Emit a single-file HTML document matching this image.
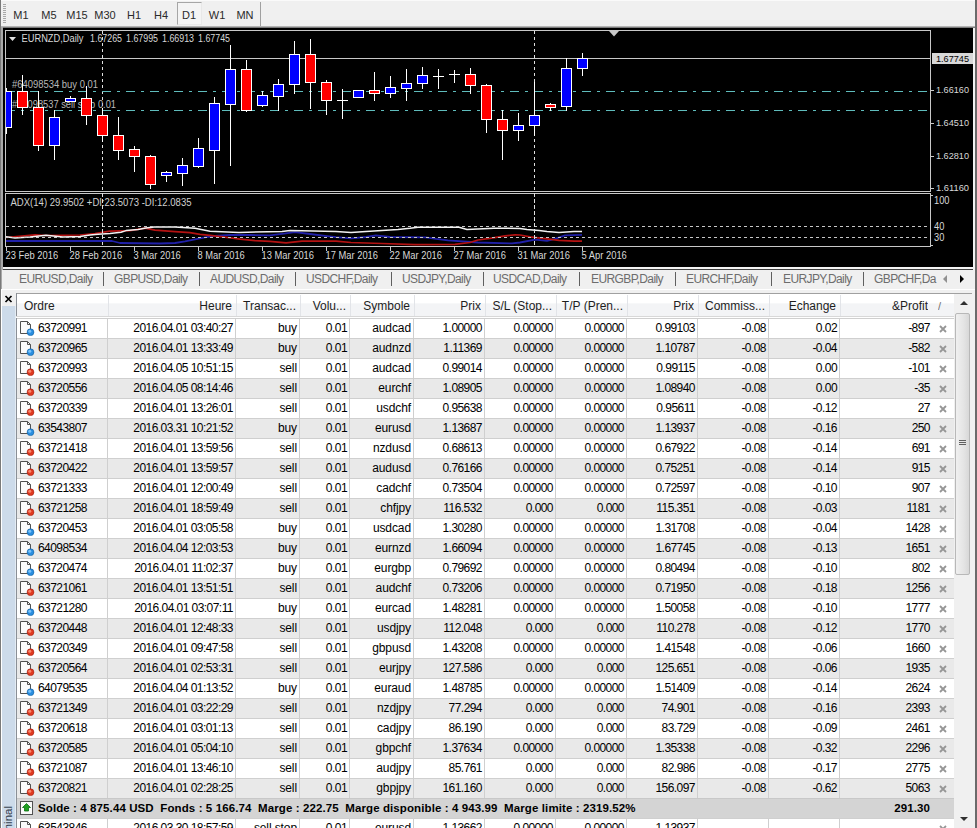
<!DOCTYPE html>
<html><head><meta charset="utf-8"><style>
html,body{margin:0;padding:0}
body{width:977px;height:828px;overflow:hidden;position:relative;background:#f0f0f0;font-family:"Liberation Sans", sans-serif}
.tb{position:absolute;font-size:11px;color:#2a2a2a;text-align:center;line-height:14px}
.tab{position:absolute;font-size:12px;letter-spacing:-0.6px;color:#6d6d6d;line-height:16px;white-space:nowrap}
.ht{position:absolute;font-size:12px;color:#1e1e1e;line-height:24px;white-space:nowrap;overflow:hidden}
.td{position:absolute;font-size:12px;letter-spacing:-0.55px;color:#000;line-height:20px;white-space:nowrap;text-align:right}
.x{position:absolute;font-size:11px;color:#8a8a8a;line-height:20px;width:14px;text-align:center}
</style></head>
<body>
<div style="position:absolute;left:0;top:0;width:977px;height:26px;background:#f0f0f0;border-top:1px solid #fafafa;box-sizing:border-box"></div>
<div style="position:absolute;left:0;top:26px;width:977px;height:1px;background:#b4b4b4"></div>
<div style="position:absolute;left:0;top:27px;width:977px;height:1px;background:#7c7c7c"></div>
<div style="position:absolute;left:3px;top:4px;width:3px;height:1px;background:#a8a8a8"></div>
<div style="position:absolute;left:3px;top:6px;width:3px;height:1px;background:#a8a8a8"></div>
<div style="position:absolute;left:3px;top:8px;width:3px;height:1px;background:#a8a8a8"></div>
<div style="position:absolute;left:3px;top:10px;width:3px;height:1px;background:#a8a8a8"></div>
<div style="position:absolute;left:3px;top:12px;width:3px;height:1px;background:#a8a8a8"></div>
<div style="position:absolute;left:3px;top:14px;width:3px;height:1px;background:#a8a8a8"></div>
<div style="position:absolute;left:3px;top:16px;width:3px;height:1px;background:#a8a8a8"></div>
<div style="position:absolute;left:3px;top:18px;width:3px;height:1px;background:#a8a8a8"></div>
<div style="position:absolute;left:3px;top:20px;width:3px;height:1px;background:#a8a8a8"></div>
<div style="position:absolute;left:3px;top:22px;width:3px;height:1px;background:#a8a8a8"></div>
<div style="position:absolute;left:177px;top:2px;width:25px;height:23px;box-sizing:border-box;border:1px solid #a6a6a6;border-right-color:#e8e8e8;border-bottom-color:#e8e8e8;background:#f4f4f4"></div>
<div class="tb" style="left:1px;top:8px;width:40px">M1</div>
<div class="tb" style="left:29px;top:8px;width:40px">M5</div>
<div class="tb" style="left:57px;top:8px;width:40px">M15</div>
<div class="tb" style="left:85px;top:8px;width:40px">M30</div>
<div class="tb" style="left:114px;top:8px;width:40px">H1</div>
<div class="tb" style="left:141px;top:8px;width:40px">H4</div>
<div class="tb" style="left:169px;top:8px;width:40px">D1</div>
<div class="tb" style="left:197px;top:8px;width:40px">W1</div>
<div class="tb" style="left:225px;top:8px;width:40px">MN</div>
<div style="position:absolute;left:260px;top:2px;width:1px;height:24px;background:#a0a0a0"></div>
<svg width="977" height="270" viewBox="0 0 977 270" style="position:absolute;left:0;top:0" shape-rendering="crispEdges">
<rect x="3" y="28" width="970" height="239" fill="#000"/>
<defs><clipPath id="cm"><rect x="6" y="31" width="924" height="160"/></clipPath><clipPath id="ci"><rect x="6" y="194" width="924" height="52"/></clipPath></defs>
<rect x="5.5" y="30.5" width="925" height="161" fill="none" stroke="#c8c8c8" stroke-width="1"/>
<rect x="5.5" y="193.5" width="925" height="53" fill="none" stroke="#c8c8c8" stroke-width="1"/>
<line x1="102.5" y1="31" x2="102.5" y2="246" stroke="#e0e0e0" stroke-width="1" stroke-dasharray="3,3"/>
<line x1="534.5" y1="31" x2="534.5" y2="246" stroke="#e0e0e0" stroke-width="1" stroke-dasharray="3,3"/>
<rect x="6" y="58" width="924" height="1" fill="#c8c8c8"/>
<line x1="6" y1="91.5" x2="930" y2="91.5" stroke="#5fbcbc" stroke-width="1" stroke-dasharray="9,6,3,6"/>
<line x1="6" y1="110.5" x2="930" y2="110.5" stroke="#5fbcbc" stroke-width="1" stroke-dasharray="9,6,3,6"/>
<text x="12" y="88" fill="#b8b8b8" font-family='"Liberation Sans", sans-serif' font-size="10" xml:space="preserve" textLength="86" lengthAdjust="spacingAndGlyphs" >#64098534 buy 0.01</text>
<text x="12" y="107.5" fill="#b8b8b8" font-family='"Liberation Sans", sans-serif' font-size="10" xml:space="preserve" textLength="104" lengthAdjust="spacingAndGlyphs" >#64098537 sell stop 0.01</text>
<g clip-path="url(#cm)">
<rect x="6" y="88" width="1" height="46" fill="#fff"/>
<rect x="1" y="91" width="11" height="37" fill="#fff"/>
<rect x="2" y="92" width="9" height="35" fill="#0000ff"/>
<rect x="22" y="75" width="1" height="40" fill="#fff"/>
<rect x="17" y="91" width="11" height="17" fill="#fff"/>
<rect x="18" y="92" width="9" height="15" fill="#ff0000"/>
<rect x="38" y="91" width="1" height="60" fill="#fff"/>
<rect x="33" y="107" width="11" height="39" fill="#fff"/>
<rect x="34" y="108" width="9" height="37" fill="#ff0000"/>
<rect x="54" y="110" width="1" height="50" fill="#fff"/>
<rect x="49" y="117" width="11" height="29" fill="#fff"/>
<rect x="50" y="118" width="9" height="27" fill="#0000ff"/>
<rect x="70" y="96" width="1" height="6" fill="#fff"/>
<rect x="65" y="98" width="11" height="4" fill="#fff"/>
<rect x="66" y="99" width="9" height="2" fill="#0000ff"/>
<rect x="86" y="86" width="1" height="39" fill="#fff"/>
<rect x="81" y="98" width="11" height="18" fill="#fff"/>
<rect x="82" y="99" width="9" height="16" fill="#ff0000"/>
<rect x="102" y="108" width="1" height="34" fill="#fff"/>
<rect x="97" y="115" width="11" height="21" fill="#fff"/>
<rect x="98" y="116" width="9" height="19" fill="#ff0000"/>
<rect x="118" y="117" width="1" height="43" fill="#fff"/>
<rect x="113" y="135" width="11" height="16" fill="#fff"/>
<rect x="114" y="136" width="9" height="14" fill="#ff0000"/>
<rect x="134" y="146" width="1" height="26" fill="#fff"/>
<rect x="129" y="149" width="11" height="8" fill="#fff"/>
<rect x="130" y="150" width="9" height="6" fill="#ff0000"/>
<rect x="150" y="155" width="1" height="34" fill="#fff"/>
<rect x="145" y="156" width="11" height="29" fill="#fff"/>
<rect x="146" y="157" width="9" height="27" fill="#ff0000"/>
<rect x="166" y="171" width="1" height="11" fill="#fff"/>
<rect x="161" y="172" width="11" height="4" fill="#fff"/>
<rect x="162" y="173" width="9" height="2" fill="#0000ff"/>
<rect x="182" y="158" width="1" height="28" fill="#fff"/>
<rect x="177" y="165" width="11" height="9" fill="#fff"/>
<rect x="178" y="166" width="9" height="7" fill="#0000ff"/>
<rect x="198" y="138" width="1" height="30" fill="#fff"/>
<rect x="193" y="148" width="11" height="19" fill="#fff"/>
<rect x="194" y="149" width="9" height="17" fill="#0000ff"/>
<rect x="214" y="97" width="1" height="87" fill="#fff"/>
<rect x="209" y="103" width="11" height="48" fill="#fff"/>
<rect x="210" y="104" width="9" height="46" fill="#0000ff"/>
<rect x="230" y="45" width="1" height="121" fill="#fff"/>
<rect x="225" y="69" width="11" height="36" fill="#fff"/>
<rect x="226" y="70" width="9" height="34" fill="#0000ff"/>
<rect x="246" y="60" width="1" height="52" fill="#fff"/>
<rect x="241" y="69" width="11" height="42" fill="#fff"/>
<rect x="242" y="70" width="9" height="40" fill="#ff0000"/>
<rect x="262" y="91" width="1" height="16" fill="#fff"/>
<rect x="257" y="95" width="11" height="11" fill="#fff"/>
<rect x="258" y="96" width="9" height="9" fill="#0000ff"/>
<rect x="278" y="79" width="1" height="32" fill="#fff"/>
<rect x="273" y="84" width="11" height="13" fill="#fff"/>
<rect x="274" y="85" width="9" height="11" fill="#0000ff"/>
<rect x="294" y="41" width="1" height="53" fill="#fff"/>
<rect x="289" y="54" width="11" height="31" fill="#fff"/>
<rect x="290" y="55" width="9" height="29" fill="#0000ff"/>
<rect x="310" y="39" width="1" height="70" fill="#fff"/>
<rect x="305" y="54" width="11" height="29" fill="#fff"/>
<rect x="306" y="55" width="9" height="27" fill="#ff0000"/>
<rect x="326" y="80" width="1" height="35" fill="#fff"/>
<rect x="321" y="82" width="11" height="19" fill="#fff"/>
<rect x="322" y="83" width="9" height="17" fill="#ff0000"/>
<rect x="342" y="89" width="1" height="30" fill="#fff"/>
<rect x="337" y="100" width="11" height="1" fill="#fff"/>
<rect x="358" y="90" width="1" height="8" fill="#fff"/>
<rect x="353" y="90" width="11" height="8" fill="#fff"/>
<rect x="354" y="91" width="9" height="6" fill="#0000ff"/>
<rect x="374" y="72" width="1" height="29" fill="#fff"/>
<rect x="369" y="90" width="11" height="4" fill="#fff"/>
<rect x="370" y="91" width="9" height="2" fill="#ff0000"/>
<rect x="390" y="76" width="1" height="22" fill="#fff"/>
<rect x="385" y="87" width="11" height="7" fill="#fff"/>
<rect x="386" y="88" width="9" height="5" fill="#0000ff"/>
<rect x="406" y="69" width="1" height="32" fill="#fff"/>
<rect x="401" y="83" width="11" height="6" fill="#fff"/>
<rect x="402" y="84" width="9" height="4" fill="#0000ff"/>
<rect x="422" y="67" width="1" height="22" fill="#fff"/>
<rect x="417" y="75" width="11" height="9" fill="#fff"/>
<rect x="418" y="76" width="9" height="7" fill="#0000ff"/>
<rect x="438" y="69" width="1" height="20" fill="#fff"/>
<rect x="433" y="76" width="11" height="1" fill="#fff"/>
<rect x="454" y="70" width="1" height="13" fill="#fff"/>
<rect x="449" y="74" width="11" height="1" fill="#fff"/>
<rect x="470" y="68" width="1" height="26" fill="#fff"/>
<rect x="465" y="74" width="11" height="12" fill="#fff"/>
<rect x="466" y="75" width="9" height="10" fill="#ff0000"/>
<rect x="486" y="84" width="1" height="49" fill="#fff"/>
<rect x="481" y="85" width="11" height="35" fill="#fff"/>
<rect x="482" y="86" width="9" height="33" fill="#ff0000"/>
<rect x="502" y="110" width="1" height="50" fill="#fff"/>
<rect x="497" y="119" width="11" height="12" fill="#fff"/>
<rect x="498" y="120" width="9" height="10" fill="#ff0000"/>
<rect x="518" y="113" width="1" height="28" fill="#fff"/>
<rect x="513" y="125" width="11" height="6" fill="#fff"/>
<rect x="514" y="126" width="9" height="4" fill="#0000ff"/>
<rect x="534" y="82" width="1" height="54" fill="#fff"/>
<rect x="529" y="115" width="11" height="11" fill="#fff"/>
<rect x="530" y="116" width="9" height="9" fill="#0000ff"/>
<rect x="550" y="103" width="1" height="8" fill="#fff"/>
<rect x="545" y="104" width="11" height="4" fill="#fff"/>
<rect x="546" y="105" width="9" height="2" fill="#ff0000"/>
<rect x="566" y="58" width="1" height="53" fill="#fff"/>
<rect x="561" y="68" width="11" height="39" fill="#fff"/>
<rect x="562" y="69" width="9" height="37" fill="#0000ff"/>
<rect x="582" y="53" width="1" height="23" fill="#fff"/>
<rect x="577" y="58" width="11" height="11" fill="#fff"/>
<rect x="578" y="59" width="9" height="9" fill="#0000ff"/>
</g>
<path d="M9 37 L16 37 L12.5 41 Z" fill="#e0e0e0" shape-rendering="auto"/>
<text x="21.5" y="42.3" fill="#d8d8d8" font-family='"Liberation Sans", sans-serif' font-size="10" xml:space="preserve" textLength="62" lengthAdjust="spacingAndGlyphs" >EURNZD,Daily</text>
<text x="90" y="42.3" fill="#d8d8d8" font-family='"Liberation Sans", sans-serif' font-size="10" xml:space="preserve" textLength="32" lengthAdjust="spacingAndGlyphs" >1.67265</text>
<text x="126" y="42.3" fill="#d8d8d8" font-family='"Liberation Sans", sans-serif' font-size="10" xml:space="preserve" textLength="32" lengthAdjust="spacingAndGlyphs" >1.67995</text>
<text x="162" y="42.3" fill="#d8d8d8" font-family='"Liberation Sans", sans-serif' font-size="10" xml:space="preserve" textLength="32" lengthAdjust="spacingAndGlyphs" >1.66913</text>
<text x="198" y="42.3" fill="#d8d8d8" font-family='"Liberation Sans", sans-serif' font-size="10" xml:space="preserve" textLength="32" lengthAdjust="spacingAndGlyphs" >1.67745</text>
<rect x="931" y="90" width="3" height="1" fill="#c8c8c8"/>
<text x="936" y="93.3" fill="#d8d8d8" font-family='"Liberation Sans", sans-serif' font-size="9.5" xml:space="preserve" textLength="33" lengthAdjust="spacingAndGlyphs" >1.66160</text>
<rect x="931" y="123" width="3" height="1" fill="#c8c8c8"/>
<text x="936" y="126.3" fill="#d8d8d8" font-family='"Liberation Sans", sans-serif' font-size="9.5" xml:space="preserve" textLength="33" lengthAdjust="spacingAndGlyphs" >1.64510</text>
<rect x="931" y="156" width="3" height="1" fill="#c8c8c8"/>
<text x="936" y="159.3" fill="#d8d8d8" font-family='"Liberation Sans", sans-serif' font-size="9.5" xml:space="preserve" textLength="33" lengthAdjust="spacingAndGlyphs" >1.62810</text>
<rect x="931" y="188" width="3" height="1" fill="#c8c8c8"/>
<text x="936" y="191.3" fill="#d8d8d8" font-family='"Liberation Sans", sans-serif' font-size="9.5" xml:space="preserve" textLength="33" lengthAdjust="spacingAndGlyphs" >1.61160</text>
<rect x="932" y="53" width="41" height="11" fill="#d8d8d8"/>
<text x="936" y="62" fill="#000" font-family='"Liberation Sans", sans-serif' font-size="9.5" xml:space="preserve" textLength="33" lengthAdjust="spacingAndGlyphs" >1.67745</text>
<path d="M609 31 L619 31 L614 36.5 Z" fill="#c8c8c8" shape-rendering="auto"/>
<text x="10.5" y="206" fill="#d0d0d0" font-family='"Liberation Sans", sans-serif' font-size="10" xml:space="preserve" textLength="181" lengthAdjust="spacingAndGlyphs" >ADX(14) 29.9502 +DI:23.5073 -DI:12.0835</text>
<polyline points="6,241 112,241 120,243 160,243.5 175,243 185,241.4 195,239.4 205,237.4 215,235.8 230,234.8 250,235 270,235.3 282,233.8 295,232.2 310,234 325,235.8 336,237.2 351,238.4 366,237 376,235.3 390,237 426,237.4 436,238.9 448,240.4 478,242.5 512,243.4 520,242.5 535,239.6 547,240.8 555,238.8 565,235.3 582,234.9" fill="none" stroke="#2020a8" stroke-width="1.8" shape-rendering="auto" stroke-linejoin="round" clip-path="url(#ci)"/>
<polyline points="6,237.5 35,234.8 46,235.5 80,235 95,233.5 110,231.2 130,230.6 145,228.1 155,230.2 175,231.7 190,232.7 200,234.3 210,235.3 225,237.1 240,239.2 255,240.7 270,241.4 286,242.8 302,241.1 336,241.1 351,242.5 382,243.5 415,244.7 455,244.3 470,242.5 478,240 490,238.4 505,235.8 515,234.8 520,235 530,236.8 547,238.8 559,240.4 574,241.2 582,241.2" fill="none" stroke="#b41212" stroke-width="1.7" shape-rendering="auto" stroke-linejoin="round" clip-path="url(#ci)"/>
<polyline points="6,236.8 15,237.9 30,237 46,235.3 63,237 80,236.5 90,235.1 98,234.3 110,233.4 121,232.3 126,230.6 138,229.4 146,228.1 154,227 175,227.1 195,228.3 210,231.2 239,232.4 282,231.4 290,230.4 336,231.4 351,232.4 366,231.4 382,230.4 398,229.4 410,228.3 418,227.3 459,227.3 467,229.4 494,228.3 520,228.4 527,229.5 539,230.4 547,231.4 559,232.5 574,231.4 582,231.4" fill="none" stroke="#f2f2f2" stroke-width="1.5" shape-rendering="auto" stroke-linejoin="round" clip-path="url(#ci)"/>
<line x1="6" y1="226.5" x2="930" y2="226.5" stroke="#c8c8c8" stroke-width="1" stroke-dasharray="3,3"/>
<line x1="6" y1="237.5" x2="930" y2="237.5" stroke="#c8c8c8" stroke-width="1" stroke-dasharray="3,3"/>
<line x1="102.5" y1="194" x2="102.5" y2="246" stroke="#e0e0e0" stroke-width="1" stroke-dasharray="3,3"/>
<line x1="534.5" y1="194" x2="534.5" y2="246" stroke="#e0e0e0" stroke-width="1" stroke-dasharray="3,3"/>
<rect x="931" y="195" width="2" height="1" fill="#c8c8c8"/>
<rect x="931" y="245" width="2" height="1" fill="#c8c8c8"/>
<text x="934" y="204" fill="#d8d8d8" font-family='"Liberation Sans", sans-serif' font-size="10" xml:space="preserve" textLength="15.5" lengthAdjust="spacingAndGlyphs" >100</text>
<text x="934" y="230" fill="#d8d8d8" font-family='"Liberation Sans", sans-serif' font-size="10" xml:space="preserve" textLength="10.3" lengthAdjust="spacingAndGlyphs" >40</text>
<text x="934" y="241" fill="#d8d8d8" font-family='"Liberation Sans", sans-serif' font-size="10" xml:space="preserve" textLength="10.3" lengthAdjust="spacingAndGlyphs" >30</text>
<rect x="6" y="247" width="1" height="4" fill="#c8c8c8"/>
<text x="5.5" y="259" fill="#d8d8d8" font-family='"Liberation Sans", sans-serif' font-size="10" xml:space="preserve" textLength="52.6" lengthAdjust="spacingAndGlyphs" >23 Feb 2016</text>
<rect x="70" y="247" width="1" height="4" fill="#c8c8c8"/>
<text x="69.5" y="259" fill="#d8d8d8" font-family='"Liberation Sans", sans-serif' font-size="10" xml:space="preserve" textLength="52.6" lengthAdjust="spacingAndGlyphs" >28 Feb 2016</text>
<rect x="134" y="247" width="1" height="4" fill="#c8c8c8"/>
<text x="133.5" y="259" fill="#d8d8d8" font-family='"Liberation Sans", sans-serif' font-size="10" xml:space="preserve" textLength="47.3" lengthAdjust="spacingAndGlyphs" >3 Mar 2016</text>
<rect x="198" y="247" width="1" height="4" fill="#c8c8c8"/>
<text x="197.5" y="259" fill="#d8d8d8" font-family='"Liberation Sans", sans-serif' font-size="10" xml:space="preserve" textLength="47.3" lengthAdjust="spacingAndGlyphs" >8 Mar 2016</text>
<rect x="262" y="247" width="1" height="4" fill="#c8c8c8"/>
<text x="261.5" y="259" fill="#d8d8d8" font-family='"Liberation Sans", sans-serif' font-size="10" xml:space="preserve" textLength="52.5" lengthAdjust="spacingAndGlyphs" >13 Mar 2016</text>
<rect x="326" y="247" width="1" height="4" fill="#c8c8c8"/>
<text x="325.5" y="259" fill="#d8d8d8" font-family='"Liberation Sans", sans-serif' font-size="10" xml:space="preserve" textLength="52.5" lengthAdjust="spacingAndGlyphs" >17 Mar 2016</text>
<rect x="390" y="247" width="1" height="4" fill="#c8c8c8"/>
<text x="389.5" y="259" fill="#d8d8d8" font-family='"Liberation Sans", sans-serif' font-size="10" xml:space="preserve" textLength="52.5" lengthAdjust="spacingAndGlyphs" >22 Mar 2016</text>
<rect x="454" y="247" width="1" height="4" fill="#c8c8c8"/>
<text x="453.5" y="259" fill="#d8d8d8" font-family='"Liberation Sans", sans-serif' font-size="10" xml:space="preserve" textLength="52.5" lengthAdjust="spacingAndGlyphs" >27 Mar 2016</text>
<rect x="518" y="247" width="1" height="4" fill="#c8c8c8"/>
<text x="517.5" y="259" fill="#d8d8d8" font-family='"Liberation Sans", sans-serif' font-size="10" xml:space="preserve" textLength="52.5" lengthAdjust="spacingAndGlyphs" >31 Mar 2016</text>
<rect x="582" y="247" width="1" height="4" fill="#c8c8c8"/>
<text x="581.5" y="259" fill="#d8d8d8" font-family='"Liberation Sans", sans-serif' font-size="10" xml:space="preserve" textLength="45.3" lengthAdjust="spacingAndGlyphs" >5 Apr 2016</text>
</svg>
<div style="position:absolute;left:3px;top:267px;width:970px;height:2px;background:#f4f4f4"></div>
<div style="position:absolute;left:3px;top:269px;width:970px;height:1px;background:#404040"></div>
<div style="position:absolute;left:2px;top:270px;width:971px;height:19px;background:#f0f0f0"></div>
<div class="tab" style="left:19px;top:271px">EURUSD,Daily</div>
<div class="tab" style="left:114px;top:271px">GBPUSD,Daily</div>
<div class="tab" style="left:210px;top:271px">AUDUSD,Daily</div>
<div class="tab" style="left:306px;top:271px">USDCHF,Daily</div>
<div class="tab" style="left:402px;top:271px">USDJPY,Daily</div>
<div class="tab" style="left:493px;top:271px">USDCAD,Daily</div>
<div class="tab" style="left:591px;top:271px">EURGBP,Daily</div>
<div class="tab" style="left:686px;top:271px">EURCHF,Daily</div>
<div class="tab" style="left:783px;top:271px">EURJPY,Daily</div>
<div class="tab" style="left:874px;top:271px">GBPCHF,Da</div>
<div style="position:absolute;left:103px;top:272px;width:1px;height:14px;background:#606060"></div>
<div style="position:absolute;left:199px;top:272px;width:1px;height:14px;background:#606060"></div>
<div style="position:absolute;left:295px;top:272px;width:1px;height:14px;background:#606060"></div>
<div style="position:absolute;left:391px;top:272px;width:1px;height:14px;background:#606060"></div>
<div style="position:absolute;left:483px;top:272px;width:1px;height:14px;background:#606060"></div>
<div style="position:absolute;left:579px;top:272px;width:1px;height:14px;background:#606060"></div>
<div style="position:absolute;left:675px;top:272px;width:1px;height:14px;background:#606060"></div>
<div style="position:absolute;left:771px;top:272px;width:1px;height:14px;background:#606060"></div>
<div style="position:absolute;left:863px;top:272px;width:1px;height:14px;background:#606060"></div>
<div style="position:absolute;left:937px;top:270px;width:36px;height:19px;background:#f0f0f0"></div>
<svg style="position:absolute;left:940px;top:274px" width="30" height="10"><path d="M7 1 L3 5 L7 9 Z" fill="#909090"/><path d="M20 1 L24 5 L20 9 Z" fill="#000"/></svg>
<div style="position:absolute;left:0;top:289px;width:977px;height:539px;background:#f0f0f0;border-top:1px solid #ffffff;box-sizing:border-box"></div>
<svg style="position:absolute;left:4px;top:295px" width="9" height="8" viewBox="0 0 9 8"><path d="M1.5 1 L7.5 7 M7.5 1 L1.5 7" stroke="#000" stroke-width="1.7"/></svg>
<div style="position:absolute;left:2px;top:306px;width:13px;height:522px;background:#cddbea;border-right:1px solid #e4ecf4"></div>
<div style="position:absolute;left:-22px;top:830px;width:60px;height:12px;transform:rotate(-90deg);font:11.5px 'Liberation Sans',sans-serif;color:#34404f;text-align:right;line-height:12px;white-space:nowrap">Terminal</div>
<div style="position:absolute;left:16px;top:293px;width:1px;height:535px;background:#8a8f96"></div>
<div style="position:absolute;left:954px;top:293px;width:18px;height:535px;background:#f0f0f0;border-top:1px solid #a0a0a0;box-sizing:border-box"></div>
<svg style="position:absolute;left:958px;top:298px" width="12" height="10"><path d="M2 7 L6 3 L10 7 Z" fill="#303030"/></svg>
<div style="position:absolute;left:955px;top:313px;width:15px;height:262px;box-sizing:border-box;border:1px solid #b8b8b8;border-radius:2px;background:linear-gradient(90deg,#f0f0f0,#e4e4e4 60%,#d8d8d8)"></div>
<div style="position:absolute;left:959px;top:440px;width:7px;height:1px;background:#606060;box-shadow:0 2px 0 #606060,0 4px 0 #606060"></div>
<svg style="position:absolute;left:958px;top:814px" width="12" height="10"><path d="M2 3 L6 7 L10 3 Z" fill="#303030"/></svg>
<div style="position:absolute;left:975px;top:0;width:2px;height:828px;background:#6a6a6a"></div>
<div style="position:absolute;left:0;top:0;width:1px;height:828px;background:#7a7a7a"></div>
<div style="position:absolute;left:1px;top:27px;width:2px;height:243px;background:#a8a8a8"></div>
<div style="position:absolute;left:1px;top:270px;width:1px;height:19px;background:#a8a8a8"></div>
<div style="position:absolute;left:1px;top:289px;width:1px;height:539px;background:#ffffff"></div>
<div style="position:absolute;left:17px;top:293px;width:937px;height:24px;background:linear-gradient(#ffffff 0%,#ffffff 40%,#f3f4f6 42%,#f3f4f6 100%);border-top:1px solid #a0a0a0;box-sizing:border-box"></div>
<div style="position:absolute;left:16px;top:316px;width:938px;height:1px;background:#d8d8d8"></div>
<div style="position:absolute;left:16px;top:317px;width:938px;height:1px;background:#ffffff"></div>
<div style="position:absolute;left:108px;top:295px;width:1px;height:21px;background:#e2e4e8"></div>
<div style="position:absolute;left:236px;top:295px;width:1px;height:21px;background:#e2e4e8"></div>
<div style="position:absolute;left:300px;top:295px;width:1px;height:21px;background:#e2e4e8"></div>
<div style="position:absolute;left:350px;top:295px;width:1px;height:21px;background:#e2e4e8"></div>
<div style="position:absolute;left:414px;top:295px;width:1px;height:21px;background:#e2e4e8"></div>
<div style="position:absolute;left:485px;top:295px;width:1px;height:21px;background:#e2e4e8"></div>
<div style="position:absolute;left:556px;top:295px;width:1px;height:21px;background:#e2e4e8"></div>
<div style="position:absolute;left:627px;top:295px;width:1px;height:21px;background:#e2e4e8"></div>
<div style="position:absolute;left:698px;top:295px;width:1px;height:21px;background:#e2e4e8"></div>
<div style="position:absolute;left:769px;top:295px;width:1px;height:21px;background:#e2e4e8"></div>
<div style="position:absolute;left:840px;top:295px;width:1px;height:21px;background:#e2e4e8"></div>
<div class="ht" style="left:24px;top:294px;width:80px;text-align:left">Ordre</div>
<div class="ht" style="left:108px;top:294px;width:124px;text-align:right">Heure</div>
<div class="ht" style="left:236px;top:294px;width:60px;text-align:right">Transac...</div>
<div class="ht" style="left:300px;top:294px;width:46px;text-align:right">Volu...</div>
<div class="ht" style="left:350px;top:294px;width:60px;text-align:right">Symbole</div>
<div class="ht" style="left:414px;top:294px;width:67px;text-align:right">Prix</div>
<div class="ht" style="left:485px;top:294px;width:67px;text-align:right">S/L (Stop...</div>
<div class="ht" style="left:556px;top:294px;width:67px;text-align:right">T/P (Pren...</div>
<div class="ht" style="left:627px;top:294px;width:67px;text-align:right">Prix</div>
<div class="ht" style="left:698px;top:294px;width:67px;text-align:right">Commiss...</div>
<div class="ht" style="left:769px;top:294px;width:67px;text-align:right">Echange</div>
<div class="ht" style="left:840px;top:294px;width:88px;text-align:right">&amp;Profit</div>
<div class="ht" style="left:938px;top:294px;width:10px;color:#707070;font-size:11px">/</div>
<div style="position:absolute;left:17px;top:318px;width:937px;height:20px;background:#ffffff;border-top:1px solid #cfcfcf;box-sizing:border-box"></div>
<div style="position:absolute;left:107px;top:318px;width:1px;height:20px;background:#cfcfcf"></div>
<div style="position:absolute;left:235px;top:318px;width:1px;height:20px;background:#cfcfcf"></div>
<div style="position:absolute;left:299px;top:318px;width:1px;height:20px;background:#cfcfcf"></div>
<div style="position:absolute;left:349px;top:318px;width:1px;height:20px;background:#cfcfcf"></div>
<div style="position:absolute;left:413px;top:318px;width:1px;height:20px;background:#cfcfcf"></div>
<div style="position:absolute;left:484px;top:318px;width:1px;height:20px;background:#cfcfcf"></div>
<div style="position:absolute;left:555px;top:318px;width:1px;height:20px;background:#cfcfcf"></div>
<div style="position:absolute;left:626px;top:318px;width:1px;height:20px;background:#cfcfcf"></div>
<div style="position:absolute;left:697px;top:318px;width:1px;height:20px;background:#cfcfcf"></div>
<div style="position:absolute;left:768px;top:318px;width:1px;height:20px;background:#cfcfcf"></div>
<div style="position:absolute;left:839px;top:318px;width:1px;height:20px;background:#cfcfcf"></div>
<svg style="position:absolute;left:19px;top:320px" width="16" height="16" viewBox="0 0 16 16"><path d="M1.5 1.5 H8.5 L11.5 4.5 V13.5 H1.5 Z" fill="#fbfbfb" stroke="#505050" stroke-width="1"/><path d="M8.5 1.5 V4.5 H11.5" fill="none" stroke="#505050" stroke-width="1"/><circle cx="11.5" cy="12.2" r="3.4" fill="#2a8ee0" stroke="#1060a0" stroke-width="0.6"/><circle cx="10.8" cy="11.2" r="1.5" fill="#8fd0ff" opacity="0.8"/></svg>
<div class="td" style="left:38px;top:318px;width:70px;text-align:left">63720991</div>
<div class="td" style="left:107px;top:318px;width:126px">2016.04.01 03:40:27</div>
<div class="td" style="left:235px;top:318px;width:62px;letter-spacing:-0.1px">buy</div>
<div class="td" style="left:299px;top:318px;width:48px">0.01</div>
<div class="td" style="left:349px;top:318px;width:62px;letter-spacing:-0.1px">audcad</div>
<div class="td" style="left:413px;top:318px;width:69px">1.00000</div>
<div class="td" style="left:484px;top:318px;width:69px">0.00000</div>
<div class="td" style="left:555px;top:318px;width:69px">0.00000</div>
<div class="td" style="left:626px;top:318px;width:69px">0.99103</div>
<div class="td" style="left:697px;top:318px;width:69px">-0.08</div>
<div class="td" style="left:768px;top:318px;width:69px">0.02</div>
<div class="td" style="left:839px;top:318px;width:91px">-897</div>
<svg style="position:absolute;left:938px;top:324px" width="10" height="10" viewBox="0 0 10 10"><path d="M2 2 L8 8 M8 2 L2 8" stroke="#969696" stroke-width="1.8"/></svg>
<div style="position:absolute;left:17px;top:338px;width:937px;height:20px;background:#e9e9e9;border-top:1px solid #cfcfcf;box-sizing:border-box"></div>
<div style="position:absolute;left:107px;top:338px;width:1px;height:20px;background:#cfcfcf"></div>
<div style="position:absolute;left:235px;top:338px;width:1px;height:20px;background:#cfcfcf"></div>
<div style="position:absolute;left:299px;top:338px;width:1px;height:20px;background:#cfcfcf"></div>
<div style="position:absolute;left:349px;top:338px;width:1px;height:20px;background:#cfcfcf"></div>
<div style="position:absolute;left:413px;top:338px;width:1px;height:20px;background:#cfcfcf"></div>
<div style="position:absolute;left:484px;top:338px;width:1px;height:20px;background:#cfcfcf"></div>
<div style="position:absolute;left:555px;top:338px;width:1px;height:20px;background:#cfcfcf"></div>
<div style="position:absolute;left:626px;top:338px;width:1px;height:20px;background:#cfcfcf"></div>
<div style="position:absolute;left:697px;top:338px;width:1px;height:20px;background:#cfcfcf"></div>
<div style="position:absolute;left:768px;top:338px;width:1px;height:20px;background:#cfcfcf"></div>
<div style="position:absolute;left:839px;top:338px;width:1px;height:20px;background:#cfcfcf"></div>
<svg style="position:absolute;left:19px;top:340px" width="16" height="16" viewBox="0 0 16 16"><path d="M1.5 1.5 H8.5 L11.5 4.5 V13.5 H1.5 Z" fill="#fbfbfb" stroke="#505050" stroke-width="1"/><path d="M8.5 1.5 V4.5 H11.5" fill="none" stroke="#505050" stroke-width="1"/><circle cx="11.5" cy="12.2" r="3.4" fill="#2a8ee0" stroke="#1060a0" stroke-width="0.6"/><circle cx="10.8" cy="11.2" r="1.5" fill="#8fd0ff" opacity="0.8"/></svg>
<div class="td" style="left:38px;top:338px;width:70px;text-align:left">63720965</div>
<div class="td" style="left:107px;top:338px;width:126px">2016.04.01 13:33:49</div>
<div class="td" style="left:235px;top:338px;width:62px;letter-spacing:-0.1px">buy</div>
<div class="td" style="left:299px;top:338px;width:48px">0.01</div>
<div class="td" style="left:349px;top:338px;width:62px;letter-spacing:-0.1px">audnzd</div>
<div class="td" style="left:413px;top:338px;width:69px">1.11369</div>
<div class="td" style="left:484px;top:338px;width:69px">0.00000</div>
<div class="td" style="left:555px;top:338px;width:69px">0.00000</div>
<div class="td" style="left:626px;top:338px;width:69px">1.10787</div>
<div class="td" style="left:697px;top:338px;width:69px">-0.08</div>
<div class="td" style="left:768px;top:338px;width:69px">-0.04</div>
<div class="td" style="left:839px;top:338px;width:91px">-582</div>
<svg style="position:absolute;left:938px;top:344px" width="10" height="10" viewBox="0 0 10 10"><path d="M2 2 L8 8 M8 2 L2 8" stroke="#969696" stroke-width="1.8"/></svg>
<div style="position:absolute;left:17px;top:358px;width:937px;height:20px;background:#ffffff;border-top:1px solid #cfcfcf;box-sizing:border-box"></div>
<div style="position:absolute;left:107px;top:358px;width:1px;height:20px;background:#cfcfcf"></div>
<div style="position:absolute;left:235px;top:358px;width:1px;height:20px;background:#cfcfcf"></div>
<div style="position:absolute;left:299px;top:358px;width:1px;height:20px;background:#cfcfcf"></div>
<div style="position:absolute;left:349px;top:358px;width:1px;height:20px;background:#cfcfcf"></div>
<div style="position:absolute;left:413px;top:358px;width:1px;height:20px;background:#cfcfcf"></div>
<div style="position:absolute;left:484px;top:358px;width:1px;height:20px;background:#cfcfcf"></div>
<div style="position:absolute;left:555px;top:358px;width:1px;height:20px;background:#cfcfcf"></div>
<div style="position:absolute;left:626px;top:358px;width:1px;height:20px;background:#cfcfcf"></div>
<div style="position:absolute;left:697px;top:358px;width:1px;height:20px;background:#cfcfcf"></div>
<div style="position:absolute;left:768px;top:358px;width:1px;height:20px;background:#cfcfcf"></div>
<div style="position:absolute;left:839px;top:358px;width:1px;height:20px;background:#cfcfcf"></div>
<svg style="position:absolute;left:19px;top:360px" width="16" height="16" viewBox="0 0 16 16"><path d="M1.5 1.5 H8.5 L11.5 4.5 V13.5 H1.5 Z" fill="#fbfbfb" stroke="#505050" stroke-width="1"/><path d="M8.5 1.5 V4.5 H11.5" fill="none" stroke="#505050" stroke-width="1"/><circle cx="11.5" cy="12.2" r="3.4" fill="#e03a20" stroke="#a02010" stroke-width="0.6"/><circle cx="10.8" cy="11.2" r="1.5" fill="#ff9a80" opacity="0.8"/></svg>
<div class="td" style="left:38px;top:358px;width:70px;text-align:left">63720993</div>
<div class="td" style="left:107px;top:358px;width:126px">2016.04.05 10:51:15</div>
<div class="td" style="left:235px;top:358px;width:62px;letter-spacing:-0.1px">sell</div>
<div class="td" style="left:299px;top:358px;width:48px">0.01</div>
<div class="td" style="left:349px;top:358px;width:62px;letter-spacing:-0.1px">audcad</div>
<div class="td" style="left:413px;top:358px;width:69px">0.99014</div>
<div class="td" style="left:484px;top:358px;width:69px">0.00000</div>
<div class="td" style="left:555px;top:358px;width:69px">0.00000</div>
<div class="td" style="left:626px;top:358px;width:69px">0.99115</div>
<div class="td" style="left:697px;top:358px;width:69px">-0.08</div>
<div class="td" style="left:768px;top:358px;width:69px">0.00</div>
<div class="td" style="left:839px;top:358px;width:91px">-101</div>
<svg style="position:absolute;left:938px;top:364px" width="10" height="10" viewBox="0 0 10 10"><path d="M2 2 L8 8 M8 2 L2 8" stroke="#969696" stroke-width="1.8"/></svg>
<div style="position:absolute;left:17px;top:378px;width:937px;height:20px;background:#e9e9e9;border-top:1px solid #cfcfcf;box-sizing:border-box"></div>
<div style="position:absolute;left:107px;top:378px;width:1px;height:20px;background:#cfcfcf"></div>
<div style="position:absolute;left:235px;top:378px;width:1px;height:20px;background:#cfcfcf"></div>
<div style="position:absolute;left:299px;top:378px;width:1px;height:20px;background:#cfcfcf"></div>
<div style="position:absolute;left:349px;top:378px;width:1px;height:20px;background:#cfcfcf"></div>
<div style="position:absolute;left:413px;top:378px;width:1px;height:20px;background:#cfcfcf"></div>
<div style="position:absolute;left:484px;top:378px;width:1px;height:20px;background:#cfcfcf"></div>
<div style="position:absolute;left:555px;top:378px;width:1px;height:20px;background:#cfcfcf"></div>
<div style="position:absolute;left:626px;top:378px;width:1px;height:20px;background:#cfcfcf"></div>
<div style="position:absolute;left:697px;top:378px;width:1px;height:20px;background:#cfcfcf"></div>
<div style="position:absolute;left:768px;top:378px;width:1px;height:20px;background:#cfcfcf"></div>
<div style="position:absolute;left:839px;top:378px;width:1px;height:20px;background:#cfcfcf"></div>
<svg style="position:absolute;left:19px;top:380px" width="16" height="16" viewBox="0 0 16 16"><path d="M1.5 1.5 H8.5 L11.5 4.5 V13.5 H1.5 Z" fill="#fbfbfb" stroke="#505050" stroke-width="1"/><path d="M8.5 1.5 V4.5 H11.5" fill="none" stroke="#505050" stroke-width="1"/><circle cx="11.5" cy="12.2" r="3.4" fill="#e03a20" stroke="#a02010" stroke-width="0.6"/><circle cx="10.8" cy="11.2" r="1.5" fill="#ff9a80" opacity="0.8"/></svg>
<div class="td" style="left:38px;top:378px;width:70px;text-align:left">63720556</div>
<div class="td" style="left:107px;top:378px;width:126px">2016.04.05 08:14:46</div>
<div class="td" style="left:235px;top:378px;width:62px;letter-spacing:-0.1px">sell</div>
<div class="td" style="left:299px;top:378px;width:48px">0.01</div>
<div class="td" style="left:349px;top:378px;width:62px;letter-spacing:-0.1px">eurchf</div>
<div class="td" style="left:413px;top:378px;width:69px">1.08905</div>
<div class="td" style="left:484px;top:378px;width:69px">0.00000</div>
<div class="td" style="left:555px;top:378px;width:69px">0.00000</div>
<div class="td" style="left:626px;top:378px;width:69px">1.08940</div>
<div class="td" style="left:697px;top:378px;width:69px">-0.08</div>
<div class="td" style="left:768px;top:378px;width:69px">0.00</div>
<div class="td" style="left:839px;top:378px;width:91px">-35</div>
<svg style="position:absolute;left:938px;top:384px" width="10" height="10" viewBox="0 0 10 10"><path d="M2 2 L8 8 M8 2 L2 8" stroke="#969696" stroke-width="1.8"/></svg>
<div style="position:absolute;left:17px;top:398px;width:937px;height:20px;background:#ffffff;border-top:1px solid #cfcfcf;box-sizing:border-box"></div>
<div style="position:absolute;left:107px;top:398px;width:1px;height:20px;background:#cfcfcf"></div>
<div style="position:absolute;left:235px;top:398px;width:1px;height:20px;background:#cfcfcf"></div>
<div style="position:absolute;left:299px;top:398px;width:1px;height:20px;background:#cfcfcf"></div>
<div style="position:absolute;left:349px;top:398px;width:1px;height:20px;background:#cfcfcf"></div>
<div style="position:absolute;left:413px;top:398px;width:1px;height:20px;background:#cfcfcf"></div>
<div style="position:absolute;left:484px;top:398px;width:1px;height:20px;background:#cfcfcf"></div>
<div style="position:absolute;left:555px;top:398px;width:1px;height:20px;background:#cfcfcf"></div>
<div style="position:absolute;left:626px;top:398px;width:1px;height:20px;background:#cfcfcf"></div>
<div style="position:absolute;left:697px;top:398px;width:1px;height:20px;background:#cfcfcf"></div>
<div style="position:absolute;left:768px;top:398px;width:1px;height:20px;background:#cfcfcf"></div>
<div style="position:absolute;left:839px;top:398px;width:1px;height:20px;background:#cfcfcf"></div>
<svg style="position:absolute;left:19px;top:400px" width="16" height="16" viewBox="0 0 16 16"><path d="M1.5 1.5 H8.5 L11.5 4.5 V13.5 H1.5 Z" fill="#fbfbfb" stroke="#505050" stroke-width="1"/><path d="M8.5 1.5 V4.5 H11.5" fill="none" stroke="#505050" stroke-width="1"/><circle cx="11.5" cy="12.2" r="3.4" fill="#e03a20" stroke="#a02010" stroke-width="0.6"/><circle cx="10.8" cy="11.2" r="1.5" fill="#ff9a80" opacity="0.8"/></svg>
<div class="td" style="left:38px;top:398px;width:70px;text-align:left">63720339</div>
<div class="td" style="left:107px;top:398px;width:126px">2016.04.01 13:26:01</div>
<div class="td" style="left:235px;top:398px;width:62px;letter-spacing:-0.1px">sell</div>
<div class="td" style="left:299px;top:398px;width:48px">0.01</div>
<div class="td" style="left:349px;top:398px;width:62px;letter-spacing:-0.1px">usdchf</div>
<div class="td" style="left:413px;top:398px;width:69px">0.95638</div>
<div class="td" style="left:484px;top:398px;width:69px">0.00000</div>
<div class="td" style="left:555px;top:398px;width:69px">0.00000</div>
<div class="td" style="left:626px;top:398px;width:69px">0.95611</div>
<div class="td" style="left:697px;top:398px;width:69px">-0.08</div>
<div class="td" style="left:768px;top:398px;width:69px">-0.12</div>
<div class="td" style="left:839px;top:398px;width:91px">27</div>
<svg style="position:absolute;left:938px;top:404px" width="10" height="10" viewBox="0 0 10 10"><path d="M2 2 L8 8 M8 2 L2 8" stroke="#969696" stroke-width="1.8"/></svg>
<div style="position:absolute;left:17px;top:418px;width:937px;height:20px;background:#e9e9e9;border-top:1px solid #cfcfcf;box-sizing:border-box"></div>
<div style="position:absolute;left:107px;top:418px;width:1px;height:20px;background:#cfcfcf"></div>
<div style="position:absolute;left:235px;top:418px;width:1px;height:20px;background:#cfcfcf"></div>
<div style="position:absolute;left:299px;top:418px;width:1px;height:20px;background:#cfcfcf"></div>
<div style="position:absolute;left:349px;top:418px;width:1px;height:20px;background:#cfcfcf"></div>
<div style="position:absolute;left:413px;top:418px;width:1px;height:20px;background:#cfcfcf"></div>
<div style="position:absolute;left:484px;top:418px;width:1px;height:20px;background:#cfcfcf"></div>
<div style="position:absolute;left:555px;top:418px;width:1px;height:20px;background:#cfcfcf"></div>
<div style="position:absolute;left:626px;top:418px;width:1px;height:20px;background:#cfcfcf"></div>
<div style="position:absolute;left:697px;top:418px;width:1px;height:20px;background:#cfcfcf"></div>
<div style="position:absolute;left:768px;top:418px;width:1px;height:20px;background:#cfcfcf"></div>
<div style="position:absolute;left:839px;top:418px;width:1px;height:20px;background:#cfcfcf"></div>
<svg style="position:absolute;left:19px;top:420px" width="16" height="16" viewBox="0 0 16 16"><path d="M1.5 1.5 H8.5 L11.5 4.5 V13.5 H1.5 Z" fill="#fbfbfb" stroke="#505050" stroke-width="1"/><path d="M8.5 1.5 V4.5 H11.5" fill="none" stroke="#505050" stroke-width="1"/><circle cx="11.5" cy="12.2" r="3.4" fill="#2a8ee0" stroke="#1060a0" stroke-width="0.6"/><circle cx="10.8" cy="11.2" r="1.5" fill="#8fd0ff" opacity="0.8"/></svg>
<div class="td" style="left:38px;top:418px;width:70px;text-align:left">63543807</div>
<div class="td" style="left:107px;top:418px;width:126px">2016.03.31 10:21:52</div>
<div class="td" style="left:235px;top:418px;width:62px;letter-spacing:-0.1px">buy</div>
<div class="td" style="left:299px;top:418px;width:48px">0.01</div>
<div class="td" style="left:349px;top:418px;width:62px;letter-spacing:-0.1px">eurusd</div>
<div class="td" style="left:413px;top:418px;width:69px">1.13687</div>
<div class="td" style="left:484px;top:418px;width:69px">0.00000</div>
<div class="td" style="left:555px;top:418px;width:69px">0.00000</div>
<div class="td" style="left:626px;top:418px;width:69px">1.13937</div>
<div class="td" style="left:697px;top:418px;width:69px">-0.08</div>
<div class="td" style="left:768px;top:418px;width:69px">-0.16</div>
<div class="td" style="left:839px;top:418px;width:91px">250</div>
<svg style="position:absolute;left:938px;top:424px" width="10" height="10" viewBox="0 0 10 10"><path d="M2 2 L8 8 M8 2 L2 8" stroke="#969696" stroke-width="1.8"/></svg>
<div style="position:absolute;left:17px;top:438px;width:937px;height:20px;background:#ffffff;border-top:1px solid #cfcfcf;box-sizing:border-box"></div>
<div style="position:absolute;left:107px;top:438px;width:1px;height:20px;background:#cfcfcf"></div>
<div style="position:absolute;left:235px;top:438px;width:1px;height:20px;background:#cfcfcf"></div>
<div style="position:absolute;left:299px;top:438px;width:1px;height:20px;background:#cfcfcf"></div>
<div style="position:absolute;left:349px;top:438px;width:1px;height:20px;background:#cfcfcf"></div>
<div style="position:absolute;left:413px;top:438px;width:1px;height:20px;background:#cfcfcf"></div>
<div style="position:absolute;left:484px;top:438px;width:1px;height:20px;background:#cfcfcf"></div>
<div style="position:absolute;left:555px;top:438px;width:1px;height:20px;background:#cfcfcf"></div>
<div style="position:absolute;left:626px;top:438px;width:1px;height:20px;background:#cfcfcf"></div>
<div style="position:absolute;left:697px;top:438px;width:1px;height:20px;background:#cfcfcf"></div>
<div style="position:absolute;left:768px;top:438px;width:1px;height:20px;background:#cfcfcf"></div>
<div style="position:absolute;left:839px;top:438px;width:1px;height:20px;background:#cfcfcf"></div>
<svg style="position:absolute;left:19px;top:440px" width="16" height="16" viewBox="0 0 16 16"><path d="M1.5 1.5 H8.5 L11.5 4.5 V13.5 H1.5 Z" fill="#fbfbfb" stroke="#505050" stroke-width="1"/><path d="M8.5 1.5 V4.5 H11.5" fill="none" stroke="#505050" stroke-width="1"/><circle cx="11.5" cy="12.2" r="3.4" fill="#e03a20" stroke="#a02010" stroke-width="0.6"/><circle cx="10.8" cy="11.2" r="1.5" fill="#ff9a80" opacity="0.8"/></svg>
<div class="td" style="left:38px;top:438px;width:70px;text-align:left">63721418</div>
<div class="td" style="left:107px;top:438px;width:126px">2016.04.01 13:59:56</div>
<div class="td" style="left:235px;top:438px;width:62px;letter-spacing:-0.1px">sell</div>
<div class="td" style="left:299px;top:438px;width:48px">0.01</div>
<div class="td" style="left:349px;top:438px;width:62px;letter-spacing:-0.1px">nzdusd</div>
<div class="td" style="left:413px;top:438px;width:69px">0.68613</div>
<div class="td" style="left:484px;top:438px;width:69px">0.00000</div>
<div class="td" style="left:555px;top:438px;width:69px">0.00000</div>
<div class="td" style="left:626px;top:438px;width:69px">0.67922</div>
<div class="td" style="left:697px;top:438px;width:69px">-0.08</div>
<div class="td" style="left:768px;top:438px;width:69px">-0.14</div>
<div class="td" style="left:839px;top:438px;width:91px">691</div>
<svg style="position:absolute;left:938px;top:444px" width="10" height="10" viewBox="0 0 10 10"><path d="M2 2 L8 8 M8 2 L2 8" stroke="#969696" stroke-width="1.8"/></svg>
<div style="position:absolute;left:17px;top:458px;width:937px;height:20px;background:#e9e9e9;border-top:1px solid #cfcfcf;box-sizing:border-box"></div>
<div style="position:absolute;left:107px;top:458px;width:1px;height:20px;background:#cfcfcf"></div>
<div style="position:absolute;left:235px;top:458px;width:1px;height:20px;background:#cfcfcf"></div>
<div style="position:absolute;left:299px;top:458px;width:1px;height:20px;background:#cfcfcf"></div>
<div style="position:absolute;left:349px;top:458px;width:1px;height:20px;background:#cfcfcf"></div>
<div style="position:absolute;left:413px;top:458px;width:1px;height:20px;background:#cfcfcf"></div>
<div style="position:absolute;left:484px;top:458px;width:1px;height:20px;background:#cfcfcf"></div>
<div style="position:absolute;left:555px;top:458px;width:1px;height:20px;background:#cfcfcf"></div>
<div style="position:absolute;left:626px;top:458px;width:1px;height:20px;background:#cfcfcf"></div>
<div style="position:absolute;left:697px;top:458px;width:1px;height:20px;background:#cfcfcf"></div>
<div style="position:absolute;left:768px;top:458px;width:1px;height:20px;background:#cfcfcf"></div>
<div style="position:absolute;left:839px;top:458px;width:1px;height:20px;background:#cfcfcf"></div>
<svg style="position:absolute;left:19px;top:460px" width="16" height="16" viewBox="0 0 16 16"><path d="M1.5 1.5 H8.5 L11.5 4.5 V13.5 H1.5 Z" fill="#fbfbfb" stroke="#505050" stroke-width="1"/><path d="M8.5 1.5 V4.5 H11.5" fill="none" stroke="#505050" stroke-width="1"/><circle cx="11.5" cy="12.2" r="3.4" fill="#e03a20" stroke="#a02010" stroke-width="0.6"/><circle cx="10.8" cy="11.2" r="1.5" fill="#ff9a80" opacity="0.8"/></svg>
<div class="td" style="left:38px;top:458px;width:70px;text-align:left">63720422</div>
<div class="td" style="left:107px;top:458px;width:126px">2016.04.01 13:59:57</div>
<div class="td" style="left:235px;top:458px;width:62px;letter-spacing:-0.1px">sell</div>
<div class="td" style="left:299px;top:458px;width:48px">0.01</div>
<div class="td" style="left:349px;top:458px;width:62px;letter-spacing:-0.1px">audusd</div>
<div class="td" style="left:413px;top:458px;width:69px">0.76166</div>
<div class="td" style="left:484px;top:458px;width:69px">0.00000</div>
<div class="td" style="left:555px;top:458px;width:69px">0.00000</div>
<div class="td" style="left:626px;top:458px;width:69px">0.75251</div>
<div class="td" style="left:697px;top:458px;width:69px">-0.08</div>
<div class="td" style="left:768px;top:458px;width:69px">-0.14</div>
<div class="td" style="left:839px;top:458px;width:91px">915</div>
<svg style="position:absolute;left:938px;top:464px" width="10" height="10" viewBox="0 0 10 10"><path d="M2 2 L8 8 M8 2 L2 8" stroke="#969696" stroke-width="1.8"/></svg>
<div style="position:absolute;left:17px;top:478px;width:937px;height:20px;background:#ffffff;border-top:1px solid #cfcfcf;box-sizing:border-box"></div>
<div style="position:absolute;left:107px;top:478px;width:1px;height:20px;background:#cfcfcf"></div>
<div style="position:absolute;left:235px;top:478px;width:1px;height:20px;background:#cfcfcf"></div>
<div style="position:absolute;left:299px;top:478px;width:1px;height:20px;background:#cfcfcf"></div>
<div style="position:absolute;left:349px;top:478px;width:1px;height:20px;background:#cfcfcf"></div>
<div style="position:absolute;left:413px;top:478px;width:1px;height:20px;background:#cfcfcf"></div>
<div style="position:absolute;left:484px;top:478px;width:1px;height:20px;background:#cfcfcf"></div>
<div style="position:absolute;left:555px;top:478px;width:1px;height:20px;background:#cfcfcf"></div>
<div style="position:absolute;left:626px;top:478px;width:1px;height:20px;background:#cfcfcf"></div>
<div style="position:absolute;left:697px;top:478px;width:1px;height:20px;background:#cfcfcf"></div>
<div style="position:absolute;left:768px;top:478px;width:1px;height:20px;background:#cfcfcf"></div>
<div style="position:absolute;left:839px;top:478px;width:1px;height:20px;background:#cfcfcf"></div>
<svg style="position:absolute;left:19px;top:480px" width="16" height="16" viewBox="0 0 16 16"><path d="M1.5 1.5 H8.5 L11.5 4.5 V13.5 H1.5 Z" fill="#fbfbfb" stroke="#505050" stroke-width="1"/><path d="M8.5 1.5 V4.5 H11.5" fill="none" stroke="#505050" stroke-width="1"/><circle cx="11.5" cy="12.2" r="3.4" fill="#e03a20" stroke="#a02010" stroke-width="0.6"/><circle cx="10.8" cy="11.2" r="1.5" fill="#ff9a80" opacity="0.8"/></svg>
<div class="td" style="left:38px;top:478px;width:70px;text-align:left">63721333</div>
<div class="td" style="left:107px;top:478px;width:126px">2016.04.01 12:00:49</div>
<div class="td" style="left:235px;top:478px;width:62px;letter-spacing:-0.1px">sell</div>
<div class="td" style="left:299px;top:478px;width:48px">0.01</div>
<div class="td" style="left:349px;top:478px;width:62px;letter-spacing:-0.1px">cadchf</div>
<div class="td" style="left:413px;top:478px;width:69px">0.73504</div>
<div class="td" style="left:484px;top:478px;width:69px">0.00000</div>
<div class="td" style="left:555px;top:478px;width:69px">0.00000</div>
<div class="td" style="left:626px;top:478px;width:69px">0.72597</div>
<div class="td" style="left:697px;top:478px;width:69px">-0.08</div>
<div class="td" style="left:768px;top:478px;width:69px">-0.10</div>
<div class="td" style="left:839px;top:478px;width:91px">907</div>
<svg style="position:absolute;left:938px;top:484px" width="10" height="10" viewBox="0 0 10 10"><path d="M2 2 L8 8 M8 2 L2 8" stroke="#969696" stroke-width="1.8"/></svg>
<div style="position:absolute;left:17px;top:498px;width:937px;height:20px;background:#e9e9e9;border-top:1px solid #cfcfcf;box-sizing:border-box"></div>
<div style="position:absolute;left:107px;top:498px;width:1px;height:20px;background:#cfcfcf"></div>
<div style="position:absolute;left:235px;top:498px;width:1px;height:20px;background:#cfcfcf"></div>
<div style="position:absolute;left:299px;top:498px;width:1px;height:20px;background:#cfcfcf"></div>
<div style="position:absolute;left:349px;top:498px;width:1px;height:20px;background:#cfcfcf"></div>
<div style="position:absolute;left:413px;top:498px;width:1px;height:20px;background:#cfcfcf"></div>
<div style="position:absolute;left:484px;top:498px;width:1px;height:20px;background:#cfcfcf"></div>
<div style="position:absolute;left:555px;top:498px;width:1px;height:20px;background:#cfcfcf"></div>
<div style="position:absolute;left:626px;top:498px;width:1px;height:20px;background:#cfcfcf"></div>
<div style="position:absolute;left:697px;top:498px;width:1px;height:20px;background:#cfcfcf"></div>
<div style="position:absolute;left:768px;top:498px;width:1px;height:20px;background:#cfcfcf"></div>
<div style="position:absolute;left:839px;top:498px;width:1px;height:20px;background:#cfcfcf"></div>
<svg style="position:absolute;left:19px;top:500px" width="16" height="16" viewBox="0 0 16 16"><path d="M1.5 1.5 H8.5 L11.5 4.5 V13.5 H1.5 Z" fill="#fbfbfb" stroke="#505050" stroke-width="1"/><path d="M8.5 1.5 V4.5 H11.5" fill="none" stroke="#505050" stroke-width="1"/><circle cx="11.5" cy="12.2" r="3.4" fill="#e03a20" stroke="#a02010" stroke-width="0.6"/><circle cx="10.8" cy="11.2" r="1.5" fill="#ff9a80" opacity="0.8"/></svg>
<div class="td" style="left:38px;top:498px;width:70px;text-align:left">63721258</div>
<div class="td" style="left:107px;top:498px;width:126px">2016.04.01 18:59:49</div>
<div class="td" style="left:235px;top:498px;width:62px;letter-spacing:-0.1px">sell</div>
<div class="td" style="left:299px;top:498px;width:48px">0.01</div>
<div class="td" style="left:349px;top:498px;width:62px;letter-spacing:-0.1px">chfjpy</div>
<div class="td" style="left:413px;top:498px;width:69px">116.532</div>
<div class="td" style="left:484px;top:498px;width:69px">0.000</div>
<div class="td" style="left:555px;top:498px;width:69px">0.000</div>
<div class="td" style="left:626px;top:498px;width:69px">115.351</div>
<div class="td" style="left:697px;top:498px;width:69px">-0.08</div>
<div class="td" style="left:768px;top:498px;width:69px">-0.03</div>
<div class="td" style="left:839px;top:498px;width:91px">1181</div>
<svg style="position:absolute;left:938px;top:504px" width="10" height="10" viewBox="0 0 10 10"><path d="M2 2 L8 8 M8 2 L2 8" stroke="#969696" stroke-width="1.8"/></svg>
<div style="position:absolute;left:17px;top:518px;width:937px;height:20px;background:#ffffff;border-top:1px solid #cfcfcf;box-sizing:border-box"></div>
<div style="position:absolute;left:107px;top:518px;width:1px;height:20px;background:#cfcfcf"></div>
<div style="position:absolute;left:235px;top:518px;width:1px;height:20px;background:#cfcfcf"></div>
<div style="position:absolute;left:299px;top:518px;width:1px;height:20px;background:#cfcfcf"></div>
<div style="position:absolute;left:349px;top:518px;width:1px;height:20px;background:#cfcfcf"></div>
<div style="position:absolute;left:413px;top:518px;width:1px;height:20px;background:#cfcfcf"></div>
<div style="position:absolute;left:484px;top:518px;width:1px;height:20px;background:#cfcfcf"></div>
<div style="position:absolute;left:555px;top:518px;width:1px;height:20px;background:#cfcfcf"></div>
<div style="position:absolute;left:626px;top:518px;width:1px;height:20px;background:#cfcfcf"></div>
<div style="position:absolute;left:697px;top:518px;width:1px;height:20px;background:#cfcfcf"></div>
<div style="position:absolute;left:768px;top:518px;width:1px;height:20px;background:#cfcfcf"></div>
<div style="position:absolute;left:839px;top:518px;width:1px;height:20px;background:#cfcfcf"></div>
<svg style="position:absolute;left:19px;top:520px" width="16" height="16" viewBox="0 0 16 16"><path d="M1.5 1.5 H8.5 L11.5 4.5 V13.5 H1.5 Z" fill="#fbfbfb" stroke="#505050" stroke-width="1"/><path d="M8.5 1.5 V4.5 H11.5" fill="none" stroke="#505050" stroke-width="1"/><circle cx="11.5" cy="12.2" r="3.4" fill="#2a8ee0" stroke="#1060a0" stroke-width="0.6"/><circle cx="10.8" cy="11.2" r="1.5" fill="#8fd0ff" opacity="0.8"/></svg>
<div class="td" style="left:38px;top:518px;width:70px;text-align:left">63720453</div>
<div class="td" style="left:107px;top:518px;width:126px">2016.04.01 03:05:58</div>
<div class="td" style="left:235px;top:518px;width:62px;letter-spacing:-0.1px">buy</div>
<div class="td" style="left:299px;top:518px;width:48px">0.01</div>
<div class="td" style="left:349px;top:518px;width:62px;letter-spacing:-0.1px">usdcad</div>
<div class="td" style="left:413px;top:518px;width:69px">1.30280</div>
<div class="td" style="left:484px;top:518px;width:69px">0.00000</div>
<div class="td" style="left:555px;top:518px;width:69px">0.00000</div>
<div class="td" style="left:626px;top:518px;width:69px">1.31708</div>
<div class="td" style="left:697px;top:518px;width:69px">-0.08</div>
<div class="td" style="left:768px;top:518px;width:69px">-0.04</div>
<div class="td" style="left:839px;top:518px;width:91px">1428</div>
<svg style="position:absolute;left:938px;top:524px" width="10" height="10" viewBox="0 0 10 10"><path d="M2 2 L8 8 M8 2 L2 8" stroke="#969696" stroke-width="1.8"/></svg>
<div style="position:absolute;left:17px;top:538px;width:937px;height:20px;background:#e9e9e9;border-top:1px solid #cfcfcf;box-sizing:border-box"></div>
<div style="position:absolute;left:107px;top:538px;width:1px;height:20px;background:#cfcfcf"></div>
<div style="position:absolute;left:235px;top:538px;width:1px;height:20px;background:#cfcfcf"></div>
<div style="position:absolute;left:299px;top:538px;width:1px;height:20px;background:#cfcfcf"></div>
<div style="position:absolute;left:349px;top:538px;width:1px;height:20px;background:#cfcfcf"></div>
<div style="position:absolute;left:413px;top:538px;width:1px;height:20px;background:#cfcfcf"></div>
<div style="position:absolute;left:484px;top:538px;width:1px;height:20px;background:#cfcfcf"></div>
<div style="position:absolute;left:555px;top:538px;width:1px;height:20px;background:#cfcfcf"></div>
<div style="position:absolute;left:626px;top:538px;width:1px;height:20px;background:#cfcfcf"></div>
<div style="position:absolute;left:697px;top:538px;width:1px;height:20px;background:#cfcfcf"></div>
<div style="position:absolute;left:768px;top:538px;width:1px;height:20px;background:#cfcfcf"></div>
<div style="position:absolute;left:839px;top:538px;width:1px;height:20px;background:#cfcfcf"></div>
<svg style="position:absolute;left:19px;top:540px" width="16" height="16" viewBox="0 0 16 16"><path d="M1.5 1.5 H8.5 L11.5 4.5 V13.5 H1.5 Z" fill="#fbfbfb" stroke="#505050" stroke-width="1"/><path d="M8.5 1.5 V4.5 H11.5" fill="none" stroke="#505050" stroke-width="1"/><circle cx="11.5" cy="12.2" r="3.4" fill="#2a8ee0" stroke="#1060a0" stroke-width="0.6"/><circle cx="10.8" cy="11.2" r="1.5" fill="#8fd0ff" opacity="0.8"/></svg>
<div class="td" style="left:38px;top:538px;width:70px;text-align:left">64098534</div>
<div class="td" style="left:107px;top:538px;width:126px">2016.04.04 12:03:53</div>
<div class="td" style="left:235px;top:538px;width:62px;letter-spacing:-0.1px">buy</div>
<div class="td" style="left:299px;top:538px;width:48px">0.01</div>
<div class="td" style="left:349px;top:538px;width:62px;letter-spacing:-0.1px">eurnzd</div>
<div class="td" style="left:413px;top:538px;width:69px">1.66094</div>
<div class="td" style="left:484px;top:538px;width:69px">0.00000</div>
<div class="td" style="left:555px;top:538px;width:69px">0.00000</div>
<div class="td" style="left:626px;top:538px;width:69px">1.67745</div>
<div class="td" style="left:697px;top:538px;width:69px">-0.08</div>
<div class="td" style="left:768px;top:538px;width:69px">-0.13</div>
<div class="td" style="left:839px;top:538px;width:91px">1651</div>
<svg style="position:absolute;left:938px;top:544px" width="10" height="10" viewBox="0 0 10 10"><path d="M2 2 L8 8 M8 2 L2 8" stroke="#969696" stroke-width="1.8"/></svg>
<div style="position:absolute;left:17px;top:558px;width:937px;height:20px;background:#ffffff;border-top:1px solid #cfcfcf;box-sizing:border-box"></div>
<div style="position:absolute;left:107px;top:558px;width:1px;height:20px;background:#cfcfcf"></div>
<div style="position:absolute;left:235px;top:558px;width:1px;height:20px;background:#cfcfcf"></div>
<div style="position:absolute;left:299px;top:558px;width:1px;height:20px;background:#cfcfcf"></div>
<div style="position:absolute;left:349px;top:558px;width:1px;height:20px;background:#cfcfcf"></div>
<div style="position:absolute;left:413px;top:558px;width:1px;height:20px;background:#cfcfcf"></div>
<div style="position:absolute;left:484px;top:558px;width:1px;height:20px;background:#cfcfcf"></div>
<div style="position:absolute;left:555px;top:558px;width:1px;height:20px;background:#cfcfcf"></div>
<div style="position:absolute;left:626px;top:558px;width:1px;height:20px;background:#cfcfcf"></div>
<div style="position:absolute;left:697px;top:558px;width:1px;height:20px;background:#cfcfcf"></div>
<div style="position:absolute;left:768px;top:558px;width:1px;height:20px;background:#cfcfcf"></div>
<div style="position:absolute;left:839px;top:558px;width:1px;height:20px;background:#cfcfcf"></div>
<svg style="position:absolute;left:19px;top:560px" width="16" height="16" viewBox="0 0 16 16"><path d="M1.5 1.5 H8.5 L11.5 4.5 V13.5 H1.5 Z" fill="#fbfbfb" stroke="#505050" stroke-width="1"/><path d="M8.5 1.5 V4.5 H11.5" fill="none" stroke="#505050" stroke-width="1"/><circle cx="11.5" cy="12.2" r="3.4" fill="#2a8ee0" stroke="#1060a0" stroke-width="0.6"/><circle cx="10.8" cy="11.2" r="1.5" fill="#8fd0ff" opacity="0.8"/></svg>
<div class="td" style="left:38px;top:558px;width:70px;text-align:left">63720474</div>
<div class="td" style="left:107px;top:558px;width:126px">2016.04.01 11:02:37</div>
<div class="td" style="left:235px;top:558px;width:62px;letter-spacing:-0.1px">buy</div>
<div class="td" style="left:299px;top:558px;width:48px">0.01</div>
<div class="td" style="left:349px;top:558px;width:62px;letter-spacing:-0.1px">eurgbp</div>
<div class="td" style="left:413px;top:558px;width:69px">0.79692</div>
<div class="td" style="left:484px;top:558px;width:69px">0.00000</div>
<div class="td" style="left:555px;top:558px;width:69px">0.00000</div>
<div class="td" style="left:626px;top:558px;width:69px">0.80494</div>
<div class="td" style="left:697px;top:558px;width:69px">-0.08</div>
<div class="td" style="left:768px;top:558px;width:69px">-0.10</div>
<div class="td" style="left:839px;top:558px;width:91px">802</div>
<svg style="position:absolute;left:938px;top:564px" width="10" height="10" viewBox="0 0 10 10"><path d="M2 2 L8 8 M8 2 L2 8" stroke="#969696" stroke-width="1.8"/></svg>
<div style="position:absolute;left:17px;top:578px;width:937px;height:20px;background:#e9e9e9;border-top:1px solid #cfcfcf;box-sizing:border-box"></div>
<div style="position:absolute;left:107px;top:578px;width:1px;height:20px;background:#cfcfcf"></div>
<div style="position:absolute;left:235px;top:578px;width:1px;height:20px;background:#cfcfcf"></div>
<div style="position:absolute;left:299px;top:578px;width:1px;height:20px;background:#cfcfcf"></div>
<div style="position:absolute;left:349px;top:578px;width:1px;height:20px;background:#cfcfcf"></div>
<div style="position:absolute;left:413px;top:578px;width:1px;height:20px;background:#cfcfcf"></div>
<div style="position:absolute;left:484px;top:578px;width:1px;height:20px;background:#cfcfcf"></div>
<div style="position:absolute;left:555px;top:578px;width:1px;height:20px;background:#cfcfcf"></div>
<div style="position:absolute;left:626px;top:578px;width:1px;height:20px;background:#cfcfcf"></div>
<div style="position:absolute;left:697px;top:578px;width:1px;height:20px;background:#cfcfcf"></div>
<div style="position:absolute;left:768px;top:578px;width:1px;height:20px;background:#cfcfcf"></div>
<div style="position:absolute;left:839px;top:578px;width:1px;height:20px;background:#cfcfcf"></div>
<svg style="position:absolute;left:19px;top:580px" width="16" height="16" viewBox="0 0 16 16"><path d="M1.5 1.5 H8.5 L11.5 4.5 V13.5 H1.5 Z" fill="#fbfbfb" stroke="#505050" stroke-width="1"/><path d="M8.5 1.5 V4.5 H11.5" fill="none" stroke="#505050" stroke-width="1"/><circle cx="11.5" cy="12.2" r="3.4" fill="#e03a20" stroke="#a02010" stroke-width="0.6"/><circle cx="10.8" cy="11.2" r="1.5" fill="#ff9a80" opacity="0.8"/></svg>
<div class="td" style="left:38px;top:578px;width:70px;text-align:left">63721061</div>
<div class="td" style="left:107px;top:578px;width:126px">2016.04.01 13:51:51</div>
<div class="td" style="left:235px;top:578px;width:62px;letter-spacing:-0.1px">sell</div>
<div class="td" style="left:299px;top:578px;width:48px">0.01</div>
<div class="td" style="left:349px;top:578px;width:62px;letter-spacing:-0.1px">audchf</div>
<div class="td" style="left:413px;top:578px;width:69px">0.73206</div>
<div class="td" style="left:484px;top:578px;width:69px">0.00000</div>
<div class="td" style="left:555px;top:578px;width:69px">0.00000</div>
<div class="td" style="left:626px;top:578px;width:69px">0.71950</div>
<div class="td" style="left:697px;top:578px;width:69px">-0.08</div>
<div class="td" style="left:768px;top:578px;width:69px">-0.18</div>
<div class="td" style="left:839px;top:578px;width:91px">1256</div>
<svg style="position:absolute;left:938px;top:584px" width="10" height="10" viewBox="0 0 10 10"><path d="M2 2 L8 8 M8 2 L2 8" stroke="#969696" stroke-width="1.8"/></svg>
<div style="position:absolute;left:17px;top:598px;width:937px;height:20px;background:#ffffff;border-top:1px solid #cfcfcf;box-sizing:border-box"></div>
<div style="position:absolute;left:107px;top:598px;width:1px;height:20px;background:#cfcfcf"></div>
<div style="position:absolute;left:235px;top:598px;width:1px;height:20px;background:#cfcfcf"></div>
<div style="position:absolute;left:299px;top:598px;width:1px;height:20px;background:#cfcfcf"></div>
<div style="position:absolute;left:349px;top:598px;width:1px;height:20px;background:#cfcfcf"></div>
<div style="position:absolute;left:413px;top:598px;width:1px;height:20px;background:#cfcfcf"></div>
<div style="position:absolute;left:484px;top:598px;width:1px;height:20px;background:#cfcfcf"></div>
<div style="position:absolute;left:555px;top:598px;width:1px;height:20px;background:#cfcfcf"></div>
<div style="position:absolute;left:626px;top:598px;width:1px;height:20px;background:#cfcfcf"></div>
<div style="position:absolute;left:697px;top:598px;width:1px;height:20px;background:#cfcfcf"></div>
<div style="position:absolute;left:768px;top:598px;width:1px;height:20px;background:#cfcfcf"></div>
<div style="position:absolute;left:839px;top:598px;width:1px;height:20px;background:#cfcfcf"></div>
<svg style="position:absolute;left:19px;top:600px" width="16" height="16" viewBox="0 0 16 16"><path d="M1.5 1.5 H8.5 L11.5 4.5 V13.5 H1.5 Z" fill="#fbfbfb" stroke="#505050" stroke-width="1"/><path d="M8.5 1.5 V4.5 H11.5" fill="none" stroke="#505050" stroke-width="1"/><circle cx="11.5" cy="12.2" r="3.4" fill="#2a8ee0" stroke="#1060a0" stroke-width="0.6"/><circle cx="10.8" cy="11.2" r="1.5" fill="#8fd0ff" opacity="0.8"/></svg>
<div class="td" style="left:38px;top:598px;width:70px;text-align:left">63721280</div>
<div class="td" style="left:107px;top:598px;width:126px">2016.04.01 03:07:11</div>
<div class="td" style="left:235px;top:598px;width:62px;letter-spacing:-0.1px">buy</div>
<div class="td" style="left:299px;top:598px;width:48px">0.01</div>
<div class="td" style="left:349px;top:598px;width:62px;letter-spacing:-0.1px">eurcad</div>
<div class="td" style="left:413px;top:598px;width:69px">1.48281</div>
<div class="td" style="left:484px;top:598px;width:69px">0.00000</div>
<div class="td" style="left:555px;top:598px;width:69px">0.00000</div>
<div class="td" style="left:626px;top:598px;width:69px">1.50058</div>
<div class="td" style="left:697px;top:598px;width:69px">-0.08</div>
<div class="td" style="left:768px;top:598px;width:69px">-0.10</div>
<div class="td" style="left:839px;top:598px;width:91px">1777</div>
<svg style="position:absolute;left:938px;top:604px" width="10" height="10" viewBox="0 0 10 10"><path d="M2 2 L8 8 M8 2 L2 8" stroke="#969696" stroke-width="1.8"/></svg>
<div style="position:absolute;left:17px;top:618px;width:937px;height:20px;background:#e9e9e9;border-top:1px solid #cfcfcf;box-sizing:border-box"></div>
<div style="position:absolute;left:107px;top:618px;width:1px;height:20px;background:#cfcfcf"></div>
<div style="position:absolute;left:235px;top:618px;width:1px;height:20px;background:#cfcfcf"></div>
<div style="position:absolute;left:299px;top:618px;width:1px;height:20px;background:#cfcfcf"></div>
<div style="position:absolute;left:349px;top:618px;width:1px;height:20px;background:#cfcfcf"></div>
<div style="position:absolute;left:413px;top:618px;width:1px;height:20px;background:#cfcfcf"></div>
<div style="position:absolute;left:484px;top:618px;width:1px;height:20px;background:#cfcfcf"></div>
<div style="position:absolute;left:555px;top:618px;width:1px;height:20px;background:#cfcfcf"></div>
<div style="position:absolute;left:626px;top:618px;width:1px;height:20px;background:#cfcfcf"></div>
<div style="position:absolute;left:697px;top:618px;width:1px;height:20px;background:#cfcfcf"></div>
<div style="position:absolute;left:768px;top:618px;width:1px;height:20px;background:#cfcfcf"></div>
<div style="position:absolute;left:839px;top:618px;width:1px;height:20px;background:#cfcfcf"></div>
<svg style="position:absolute;left:19px;top:620px" width="16" height="16" viewBox="0 0 16 16"><path d="M1.5 1.5 H8.5 L11.5 4.5 V13.5 H1.5 Z" fill="#fbfbfb" stroke="#505050" stroke-width="1"/><path d="M8.5 1.5 V4.5 H11.5" fill="none" stroke="#505050" stroke-width="1"/><circle cx="11.5" cy="12.2" r="3.4" fill="#e03a20" stroke="#a02010" stroke-width="0.6"/><circle cx="10.8" cy="11.2" r="1.5" fill="#ff9a80" opacity="0.8"/></svg>
<div class="td" style="left:38px;top:618px;width:70px;text-align:left">63720448</div>
<div class="td" style="left:107px;top:618px;width:126px">2016.04.01 12:48:33</div>
<div class="td" style="left:235px;top:618px;width:62px;letter-spacing:-0.1px">sell</div>
<div class="td" style="left:299px;top:618px;width:48px">0.01</div>
<div class="td" style="left:349px;top:618px;width:62px;letter-spacing:-0.1px">usdjpy</div>
<div class="td" style="left:413px;top:618px;width:69px">112.048</div>
<div class="td" style="left:484px;top:618px;width:69px">0.000</div>
<div class="td" style="left:555px;top:618px;width:69px">0.000</div>
<div class="td" style="left:626px;top:618px;width:69px">110.278</div>
<div class="td" style="left:697px;top:618px;width:69px">-0.08</div>
<div class="td" style="left:768px;top:618px;width:69px">-0.12</div>
<div class="td" style="left:839px;top:618px;width:91px">1770</div>
<svg style="position:absolute;left:938px;top:624px" width="10" height="10" viewBox="0 0 10 10"><path d="M2 2 L8 8 M8 2 L2 8" stroke="#969696" stroke-width="1.8"/></svg>
<div style="position:absolute;left:17px;top:638px;width:937px;height:20px;background:#ffffff;border-top:1px solid #cfcfcf;box-sizing:border-box"></div>
<div style="position:absolute;left:107px;top:638px;width:1px;height:20px;background:#cfcfcf"></div>
<div style="position:absolute;left:235px;top:638px;width:1px;height:20px;background:#cfcfcf"></div>
<div style="position:absolute;left:299px;top:638px;width:1px;height:20px;background:#cfcfcf"></div>
<div style="position:absolute;left:349px;top:638px;width:1px;height:20px;background:#cfcfcf"></div>
<div style="position:absolute;left:413px;top:638px;width:1px;height:20px;background:#cfcfcf"></div>
<div style="position:absolute;left:484px;top:638px;width:1px;height:20px;background:#cfcfcf"></div>
<div style="position:absolute;left:555px;top:638px;width:1px;height:20px;background:#cfcfcf"></div>
<div style="position:absolute;left:626px;top:638px;width:1px;height:20px;background:#cfcfcf"></div>
<div style="position:absolute;left:697px;top:638px;width:1px;height:20px;background:#cfcfcf"></div>
<div style="position:absolute;left:768px;top:638px;width:1px;height:20px;background:#cfcfcf"></div>
<div style="position:absolute;left:839px;top:638px;width:1px;height:20px;background:#cfcfcf"></div>
<svg style="position:absolute;left:19px;top:640px" width="16" height="16" viewBox="0 0 16 16"><path d="M1.5 1.5 H8.5 L11.5 4.5 V13.5 H1.5 Z" fill="#fbfbfb" stroke="#505050" stroke-width="1"/><path d="M8.5 1.5 V4.5 H11.5" fill="none" stroke="#505050" stroke-width="1"/><circle cx="11.5" cy="12.2" r="3.4" fill="#e03a20" stroke="#a02010" stroke-width="0.6"/><circle cx="10.8" cy="11.2" r="1.5" fill="#ff9a80" opacity="0.8"/></svg>
<div class="td" style="left:38px;top:638px;width:70px;text-align:left">63720349</div>
<div class="td" style="left:107px;top:638px;width:126px">2016.04.01 09:47:58</div>
<div class="td" style="left:235px;top:638px;width:62px;letter-spacing:-0.1px">sell</div>
<div class="td" style="left:299px;top:638px;width:48px">0.01</div>
<div class="td" style="left:349px;top:638px;width:62px;letter-spacing:-0.1px">gbpusd</div>
<div class="td" style="left:413px;top:638px;width:69px">1.43208</div>
<div class="td" style="left:484px;top:638px;width:69px">0.00000</div>
<div class="td" style="left:555px;top:638px;width:69px">0.00000</div>
<div class="td" style="left:626px;top:638px;width:69px">1.41548</div>
<div class="td" style="left:697px;top:638px;width:69px">-0.08</div>
<div class="td" style="left:768px;top:638px;width:69px">-0.06</div>
<div class="td" style="left:839px;top:638px;width:91px">1660</div>
<svg style="position:absolute;left:938px;top:644px" width="10" height="10" viewBox="0 0 10 10"><path d="M2 2 L8 8 M8 2 L2 8" stroke="#969696" stroke-width="1.8"/></svg>
<div style="position:absolute;left:17px;top:658px;width:937px;height:20px;background:#e9e9e9;border-top:1px solid #cfcfcf;box-sizing:border-box"></div>
<div style="position:absolute;left:107px;top:658px;width:1px;height:20px;background:#cfcfcf"></div>
<div style="position:absolute;left:235px;top:658px;width:1px;height:20px;background:#cfcfcf"></div>
<div style="position:absolute;left:299px;top:658px;width:1px;height:20px;background:#cfcfcf"></div>
<div style="position:absolute;left:349px;top:658px;width:1px;height:20px;background:#cfcfcf"></div>
<div style="position:absolute;left:413px;top:658px;width:1px;height:20px;background:#cfcfcf"></div>
<div style="position:absolute;left:484px;top:658px;width:1px;height:20px;background:#cfcfcf"></div>
<div style="position:absolute;left:555px;top:658px;width:1px;height:20px;background:#cfcfcf"></div>
<div style="position:absolute;left:626px;top:658px;width:1px;height:20px;background:#cfcfcf"></div>
<div style="position:absolute;left:697px;top:658px;width:1px;height:20px;background:#cfcfcf"></div>
<div style="position:absolute;left:768px;top:658px;width:1px;height:20px;background:#cfcfcf"></div>
<div style="position:absolute;left:839px;top:658px;width:1px;height:20px;background:#cfcfcf"></div>
<svg style="position:absolute;left:19px;top:660px" width="16" height="16" viewBox="0 0 16 16"><path d="M1.5 1.5 H8.5 L11.5 4.5 V13.5 H1.5 Z" fill="#fbfbfb" stroke="#505050" stroke-width="1"/><path d="M8.5 1.5 V4.5 H11.5" fill="none" stroke="#505050" stroke-width="1"/><circle cx="11.5" cy="12.2" r="3.4" fill="#e03a20" stroke="#a02010" stroke-width="0.6"/><circle cx="10.8" cy="11.2" r="1.5" fill="#ff9a80" opacity="0.8"/></svg>
<div class="td" style="left:38px;top:658px;width:70px;text-align:left">63720564</div>
<div class="td" style="left:107px;top:658px;width:126px">2016.04.01 02:53:31</div>
<div class="td" style="left:235px;top:658px;width:62px;letter-spacing:-0.1px">sell</div>
<div class="td" style="left:299px;top:658px;width:48px">0.01</div>
<div class="td" style="left:349px;top:658px;width:62px;letter-spacing:-0.1px">eurjpy</div>
<div class="td" style="left:413px;top:658px;width:69px">127.586</div>
<div class="td" style="left:484px;top:658px;width:69px">0.000</div>
<div class="td" style="left:555px;top:658px;width:69px">0.000</div>
<div class="td" style="left:626px;top:658px;width:69px">125.651</div>
<div class="td" style="left:697px;top:658px;width:69px">-0.08</div>
<div class="td" style="left:768px;top:658px;width:69px">-0.06</div>
<div class="td" style="left:839px;top:658px;width:91px">1935</div>
<svg style="position:absolute;left:938px;top:664px" width="10" height="10" viewBox="0 0 10 10"><path d="M2 2 L8 8 M8 2 L2 8" stroke="#969696" stroke-width="1.8"/></svg>
<div style="position:absolute;left:17px;top:678px;width:937px;height:20px;background:#ffffff;border-top:1px solid #cfcfcf;box-sizing:border-box"></div>
<div style="position:absolute;left:107px;top:678px;width:1px;height:20px;background:#cfcfcf"></div>
<div style="position:absolute;left:235px;top:678px;width:1px;height:20px;background:#cfcfcf"></div>
<div style="position:absolute;left:299px;top:678px;width:1px;height:20px;background:#cfcfcf"></div>
<div style="position:absolute;left:349px;top:678px;width:1px;height:20px;background:#cfcfcf"></div>
<div style="position:absolute;left:413px;top:678px;width:1px;height:20px;background:#cfcfcf"></div>
<div style="position:absolute;left:484px;top:678px;width:1px;height:20px;background:#cfcfcf"></div>
<div style="position:absolute;left:555px;top:678px;width:1px;height:20px;background:#cfcfcf"></div>
<div style="position:absolute;left:626px;top:678px;width:1px;height:20px;background:#cfcfcf"></div>
<div style="position:absolute;left:697px;top:678px;width:1px;height:20px;background:#cfcfcf"></div>
<div style="position:absolute;left:768px;top:678px;width:1px;height:20px;background:#cfcfcf"></div>
<div style="position:absolute;left:839px;top:678px;width:1px;height:20px;background:#cfcfcf"></div>
<svg style="position:absolute;left:19px;top:680px" width="16" height="16" viewBox="0 0 16 16"><path d="M1.5 1.5 H8.5 L11.5 4.5 V13.5 H1.5 Z" fill="#fbfbfb" stroke="#505050" stroke-width="1"/><path d="M8.5 1.5 V4.5 H11.5" fill="none" stroke="#505050" stroke-width="1"/><circle cx="11.5" cy="12.2" r="3.4" fill="#2a8ee0" stroke="#1060a0" stroke-width="0.6"/><circle cx="10.8" cy="11.2" r="1.5" fill="#8fd0ff" opacity="0.8"/></svg>
<div class="td" style="left:38px;top:678px;width:70px;text-align:left">64079535</div>
<div class="td" style="left:107px;top:678px;width:126px">2016.04.04 01:13:52</div>
<div class="td" style="left:235px;top:678px;width:62px;letter-spacing:-0.1px">buy</div>
<div class="td" style="left:299px;top:678px;width:48px">0.01</div>
<div class="td" style="left:349px;top:678px;width:62px;letter-spacing:-0.1px">euraud</div>
<div class="td" style="left:413px;top:678px;width:69px">1.48785</div>
<div class="td" style="left:484px;top:678px;width:69px">0.00000</div>
<div class="td" style="left:555px;top:678px;width:69px">0.00000</div>
<div class="td" style="left:626px;top:678px;width:69px">1.51409</div>
<div class="td" style="left:697px;top:678px;width:69px">-0.08</div>
<div class="td" style="left:768px;top:678px;width:69px">-0.14</div>
<div class="td" style="left:839px;top:678px;width:91px">2624</div>
<svg style="position:absolute;left:938px;top:684px" width="10" height="10" viewBox="0 0 10 10"><path d="M2 2 L8 8 M8 2 L2 8" stroke="#969696" stroke-width="1.8"/></svg>
<div style="position:absolute;left:17px;top:698px;width:937px;height:20px;background:#e9e9e9;border-top:1px solid #cfcfcf;box-sizing:border-box"></div>
<div style="position:absolute;left:107px;top:698px;width:1px;height:20px;background:#cfcfcf"></div>
<div style="position:absolute;left:235px;top:698px;width:1px;height:20px;background:#cfcfcf"></div>
<div style="position:absolute;left:299px;top:698px;width:1px;height:20px;background:#cfcfcf"></div>
<div style="position:absolute;left:349px;top:698px;width:1px;height:20px;background:#cfcfcf"></div>
<div style="position:absolute;left:413px;top:698px;width:1px;height:20px;background:#cfcfcf"></div>
<div style="position:absolute;left:484px;top:698px;width:1px;height:20px;background:#cfcfcf"></div>
<div style="position:absolute;left:555px;top:698px;width:1px;height:20px;background:#cfcfcf"></div>
<div style="position:absolute;left:626px;top:698px;width:1px;height:20px;background:#cfcfcf"></div>
<div style="position:absolute;left:697px;top:698px;width:1px;height:20px;background:#cfcfcf"></div>
<div style="position:absolute;left:768px;top:698px;width:1px;height:20px;background:#cfcfcf"></div>
<div style="position:absolute;left:839px;top:698px;width:1px;height:20px;background:#cfcfcf"></div>
<svg style="position:absolute;left:19px;top:700px" width="16" height="16" viewBox="0 0 16 16"><path d="M1.5 1.5 H8.5 L11.5 4.5 V13.5 H1.5 Z" fill="#fbfbfb" stroke="#505050" stroke-width="1"/><path d="M8.5 1.5 V4.5 H11.5" fill="none" stroke="#505050" stroke-width="1"/><circle cx="11.5" cy="12.2" r="3.4" fill="#e03a20" stroke="#a02010" stroke-width="0.6"/><circle cx="10.8" cy="11.2" r="1.5" fill="#ff9a80" opacity="0.8"/></svg>
<div class="td" style="left:38px;top:698px;width:70px;text-align:left">63721349</div>
<div class="td" style="left:107px;top:698px;width:126px">2016.04.01 03:22:29</div>
<div class="td" style="left:235px;top:698px;width:62px;letter-spacing:-0.1px">sell</div>
<div class="td" style="left:299px;top:698px;width:48px">0.01</div>
<div class="td" style="left:349px;top:698px;width:62px;letter-spacing:-0.1px">nzdjpy</div>
<div class="td" style="left:413px;top:698px;width:69px">77.294</div>
<div class="td" style="left:484px;top:698px;width:69px">0.000</div>
<div class="td" style="left:555px;top:698px;width:69px">0.000</div>
<div class="td" style="left:626px;top:698px;width:69px">74.901</div>
<div class="td" style="left:697px;top:698px;width:69px">-0.08</div>
<div class="td" style="left:768px;top:698px;width:69px">-0.16</div>
<div class="td" style="left:839px;top:698px;width:91px">2393</div>
<svg style="position:absolute;left:938px;top:704px" width="10" height="10" viewBox="0 0 10 10"><path d="M2 2 L8 8 M8 2 L2 8" stroke="#969696" stroke-width="1.8"/></svg>
<div style="position:absolute;left:17px;top:718px;width:937px;height:20px;background:#ffffff;border-top:1px solid #cfcfcf;box-sizing:border-box"></div>
<div style="position:absolute;left:107px;top:718px;width:1px;height:20px;background:#cfcfcf"></div>
<div style="position:absolute;left:235px;top:718px;width:1px;height:20px;background:#cfcfcf"></div>
<div style="position:absolute;left:299px;top:718px;width:1px;height:20px;background:#cfcfcf"></div>
<div style="position:absolute;left:349px;top:718px;width:1px;height:20px;background:#cfcfcf"></div>
<div style="position:absolute;left:413px;top:718px;width:1px;height:20px;background:#cfcfcf"></div>
<div style="position:absolute;left:484px;top:718px;width:1px;height:20px;background:#cfcfcf"></div>
<div style="position:absolute;left:555px;top:718px;width:1px;height:20px;background:#cfcfcf"></div>
<div style="position:absolute;left:626px;top:718px;width:1px;height:20px;background:#cfcfcf"></div>
<div style="position:absolute;left:697px;top:718px;width:1px;height:20px;background:#cfcfcf"></div>
<div style="position:absolute;left:768px;top:718px;width:1px;height:20px;background:#cfcfcf"></div>
<div style="position:absolute;left:839px;top:718px;width:1px;height:20px;background:#cfcfcf"></div>
<svg style="position:absolute;left:19px;top:720px" width="16" height="16" viewBox="0 0 16 16"><path d="M1.5 1.5 H8.5 L11.5 4.5 V13.5 H1.5 Z" fill="#fbfbfb" stroke="#505050" stroke-width="1"/><path d="M8.5 1.5 V4.5 H11.5" fill="none" stroke="#505050" stroke-width="1"/><circle cx="11.5" cy="12.2" r="3.4" fill="#e03a20" stroke="#a02010" stroke-width="0.6"/><circle cx="10.8" cy="11.2" r="1.5" fill="#ff9a80" opacity="0.8"/></svg>
<div class="td" style="left:38px;top:718px;width:70px;text-align:left">63720618</div>
<div class="td" style="left:107px;top:718px;width:126px">2016.04.01 03:01:13</div>
<div class="td" style="left:235px;top:718px;width:62px;letter-spacing:-0.1px">sell</div>
<div class="td" style="left:299px;top:718px;width:48px">0.01</div>
<div class="td" style="left:349px;top:718px;width:62px;letter-spacing:-0.1px">cadjpy</div>
<div class="td" style="left:413px;top:718px;width:69px">86.190</div>
<div class="td" style="left:484px;top:718px;width:69px">0.000</div>
<div class="td" style="left:555px;top:718px;width:69px">0.000</div>
<div class="td" style="left:626px;top:718px;width:69px">83.729</div>
<div class="td" style="left:697px;top:718px;width:69px">-0.08</div>
<div class="td" style="left:768px;top:718px;width:69px">-0.09</div>
<div class="td" style="left:839px;top:718px;width:91px">2461</div>
<svg style="position:absolute;left:938px;top:724px" width="10" height="10" viewBox="0 0 10 10"><path d="M2 2 L8 8 M8 2 L2 8" stroke="#969696" stroke-width="1.8"/></svg>
<div style="position:absolute;left:17px;top:738px;width:937px;height:20px;background:#e9e9e9;border-top:1px solid #cfcfcf;box-sizing:border-box"></div>
<div style="position:absolute;left:107px;top:738px;width:1px;height:20px;background:#cfcfcf"></div>
<div style="position:absolute;left:235px;top:738px;width:1px;height:20px;background:#cfcfcf"></div>
<div style="position:absolute;left:299px;top:738px;width:1px;height:20px;background:#cfcfcf"></div>
<div style="position:absolute;left:349px;top:738px;width:1px;height:20px;background:#cfcfcf"></div>
<div style="position:absolute;left:413px;top:738px;width:1px;height:20px;background:#cfcfcf"></div>
<div style="position:absolute;left:484px;top:738px;width:1px;height:20px;background:#cfcfcf"></div>
<div style="position:absolute;left:555px;top:738px;width:1px;height:20px;background:#cfcfcf"></div>
<div style="position:absolute;left:626px;top:738px;width:1px;height:20px;background:#cfcfcf"></div>
<div style="position:absolute;left:697px;top:738px;width:1px;height:20px;background:#cfcfcf"></div>
<div style="position:absolute;left:768px;top:738px;width:1px;height:20px;background:#cfcfcf"></div>
<div style="position:absolute;left:839px;top:738px;width:1px;height:20px;background:#cfcfcf"></div>
<svg style="position:absolute;left:19px;top:740px" width="16" height="16" viewBox="0 0 16 16"><path d="M1.5 1.5 H8.5 L11.5 4.5 V13.5 H1.5 Z" fill="#fbfbfb" stroke="#505050" stroke-width="1"/><path d="M8.5 1.5 V4.5 H11.5" fill="none" stroke="#505050" stroke-width="1"/><circle cx="11.5" cy="12.2" r="3.4" fill="#e03a20" stroke="#a02010" stroke-width="0.6"/><circle cx="10.8" cy="11.2" r="1.5" fill="#ff9a80" opacity="0.8"/></svg>
<div class="td" style="left:38px;top:738px;width:70px;text-align:left">63720585</div>
<div class="td" style="left:107px;top:738px;width:126px">2016.04.01 05:04:10</div>
<div class="td" style="left:235px;top:738px;width:62px;letter-spacing:-0.1px">sell</div>
<div class="td" style="left:299px;top:738px;width:48px">0.01</div>
<div class="td" style="left:349px;top:738px;width:62px;letter-spacing:-0.1px">gbpchf</div>
<div class="td" style="left:413px;top:738px;width:69px">1.37634</div>
<div class="td" style="left:484px;top:738px;width:69px">0.00000</div>
<div class="td" style="left:555px;top:738px;width:69px">0.00000</div>
<div class="td" style="left:626px;top:738px;width:69px">1.35338</div>
<div class="td" style="left:697px;top:738px;width:69px">-0.08</div>
<div class="td" style="left:768px;top:738px;width:69px">-0.32</div>
<div class="td" style="left:839px;top:738px;width:91px">2296</div>
<svg style="position:absolute;left:938px;top:744px" width="10" height="10" viewBox="0 0 10 10"><path d="M2 2 L8 8 M8 2 L2 8" stroke="#969696" stroke-width="1.8"/></svg>
<div style="position:absolute;left:17px;top:758px;width:937px;height:20px;background:#ffffff;border-top:1px solid #cfcfcf;box-sizing:border-box"></div>
<div style="position:absolute;left:107px;top:758px;width:1px;height:20px;background:#cfcfcf"></div>
<div style="position:absolute;left:235px;top:758px;width:1px;height:20px;background:#cfcfcf"></div>
<div style="position:absolute;left:299px;top:758px;width:1px;height:20px;background:#cfcfcf"></div>
<div style="position:absolute;left:349px;top:758px;width:1px;height:20px;background:#cfcfcf"></div>
<div style="position:absolute;left:413px;top:758px;width:1px;height:20px;background:#cfcfcf"></div>
<div style="position:absolute;left:484px;top:758px;width:1px;height:20px;background:#cfcfcf"></div>
<div style="position:absolute;left:555px;top:758px;width:1px;height:20px;background:#cfcfcf"></div>
<div style="position:absolute;left:626px;top:758px;width:1px;height:20px;background:#cfcfcf"></div>
<div style="position:absolute;left:697px;top:758px;width:1px;height:20px;background:#cfcfcf"></div>
<div style="position:absolute;left:768px;top:758px;width:1px;height:20px;background:#cfcfcf"></div>
<div style="position:absolute;left:839px;top:758px;width:1px;height:20px;background:#cfcfcf"></div>
<svg style="position:absolute;left:19px;top:760px" width="16" height="16" viewBox="0 0 16 16"><path d="M1.5 1.5 H8.5 L11.5 4.5 V13.5 H1.5 Z" fill="#fbfbfb" stroke="#505050" stroke-width="1"/><path d="M8.5 1.5 V4.5 H11.5" fill="none" stroke="#505050" stroke-width="1"/><circle cx="11.5" cy="12.2" r="3.4" fill="#e03a20" stroke="#a02010" stroke-width="0.6"/><circle cx="10.8" cy="11.2" r="1.5" fill="#ff9a80" opacity="0.8"/></svg>
<div class="td" style="left:38px;top:758px;width:70px;text-align:left">63721087</div>
<div class="td" style="left:107px;top:758px;width:126px">2016.04.01 13:46:10</div>
<div class="td" style="left:235px;top:758px;width:62px;letter-spacing:-0.1px">sell</div>
<div class="td" style="left:299px;top:758px;width:48px">0.01</div>
<div class="td" style="left:349px;top:758px;width:62px;letter-spacing:-0.1px">audjpy</div>
<div class="td" style="left:413px;top:758px;width:69px">85.761</div>
<div class="td" style="left:484px;top:758px;width:69px">0.000</div>
<div class="td" style="left:555px;top:758px;width:69px">0.000</div>
<div class="td" style="left:626px;top:758px;width:69px">82.986</div>
<div class="td" style="left:697px;top:758px;width:69px">-0.08</div>
<div class="td" style="left:768px;top:758px;width:69px">-0.17</div>
<div class="td" style="left:839px;top:758px;width:91px">2775</div>
<svg style="position:absolute;left:938px;top:764px" width="10" height="10" viewBox="0 0 10 10"><path d="M2 2 L8 8 M8 2 L2 8" stroke="#969696" stroke-width="1.8"/></svg>
<div style="position:absolute;left:17px;top:778px;width:937px;height:20px;background:#e9e9e9;border-top:1px solid #cfcfcf;box-sizing:border-box"></div>
<div style="position:absolute;left:107px;top:778px;width:1px;height:20px;background:#cfcfcf"></div>
<div style="position:absolute;left:235px;top:778px;width:1px;height:20px;background:#cfcfcf"></div>
<div style="position:absolute;left:299px;top:778px;width:1px;height:20px;background:#cfcfcf"></div>
<div style="position:absolute;left:349px;top:778px;width:1px;height:20px;background:#cfcfcf"></div>
<div style="position:absolute;left:413px;top:778px;width:1px;height:20px;background:#cfcfcf"></div>
<div style="position:absolute;left:484px;top:778px;width:1px;height:20px;background:#cfcfcf"></div>
<div style="position:absolute;left:555px;top:778px;width:1px;height:20px;background:#cfcfcf"></div>
<div style="position:absolute;left:626px;top:778px;width:1px;height:20px;background:#cfcfcf"></div>
<div style="position:absolute;left:697px;top:778px;width:1px;height:20px;background:#cfcfcf"></div>
<div style="position:absolute;left:768px;top:778px;width:1px;height:20px;background:#cfcfcf"></div>
<div style="position:absolute;left:839px;top:778px;width:1px;height:20px;background:#cfcfcf"></div>
<svg style="position:absolute;left:19px;top:780px" width="16" height="16" viewBox="0 0 16 16"><path d="M1.5 1.5 H8.5 L11.5 4.5 V13.5 H1.5 Z" fill="#fbfbfb" stroke="#505050" stroke-width="1"/><path d="M8.5 1.5 V4.5 H11.5" fill="none" stroke="#505050" stroke-width="1"/><circle cx="11.5" cy="12.2" r="3.4" fill="#e03a20" stroke="#a02010" stroke-width="0.6"/><circle cx="10.8" cy="11.2" r="1.5" fill="#ff9a80" opacity="0.8"/></svg>
<div class="td" style="left:38px;top:778px;width:70px;text-align:left">63720821</div>
<div class="td" style="left:107px;top:778px;width:126px">2016.04.01 02:28:25</div>
<div class="td" style="left:235px;top:778px;width:62px;letter-spacing:-0.1px">sell</div>
<div class="td" style="left:299px;top:778px;width:48px">0.01</div>
<div class="td" style="left:349px;top:778px;width:62px;letter-spacing:-0.1px">gbpjpy</div>
<div class="td" style="left:413px;top:778px;width:69px">161.160</div>
<div class="td" style="left:484px;top:778px;width:69px">0.000</div>
<div class="td" style="left:555px;top:778px;width:69px">0.000</div>
<div class="td" style="left:626px;top:778px;width:69px">156.097</div>
<div class="td" style="left:697px;top:778px;width:69px">-0.08</div>
<div class="td" style="left:768px;top:778px;width:69px">-0.62</div>
<div class="td" style="left:839px;top:778px;width:91px">5063</div>
<svg style="position:absolute;left:938px;top:784px" width="10" height="10" viewBox="0 0 10 10"><path d="M2 2 L8 8 M8 2 L2 8" stroke="#969696" stroke-width="1.8"/></svg>
<div style="position:absolute;left:17px;top:798px;width:937px;height:20px;background:#d4d4d4;border-top:1px solid #c8c8c8;box-sizing:border-box"></div>
<svg style="position:absolute;left:19px;top:800px" width="16" height="16" viewBox="0 0 16 16"><rect x="1.5" y="1.5" width="12" height="13" fill="#fafafa" stroke="#505050"/><path d="M7.5 3.5 L11.5 7.5 H9.5 V11 H5.5 V7.5 H3.5 Z" fill="#1fa020" stroke="#0a7010" stroke-width="0.8"/></svg>
<div class="td" style="left:38px;top:798px;width:700px;text-align:left;font-weight:bold;font-size:11.5px;letter-spacing:0.1px">Solde : 4 875.44 USD&nbsp;&nbsp;Fonds : 5 166.74&nbsp;&nbsp;Marge : 222.75&nbsp;&nbsp;Marge disponible : 4 943.99&nbsp;&nbsp;Marge limite : 2319.52%</div>
<div class="td" style="left:840px;top:798px;width:90px;font-weight:bold;font-size:11.5px;letter-spacing:0.1px">291.30</div>
<div style="position:absolute;left:17px;top:818px;width:937px;height:20px;background:#ffffff;border-top:1px solid #cfcfcf;box-sizing:border-box"></div>
<div style="position:absolute;left:107px;top:818px;width:1px;height:20px;background:#cfcfcf"></div>
<div style="position:absolute;left:235px;top:818px;width:1px;height:20px;background:#cfcfcf"></div>
<div style="position:absolute;left:299px;top:818px;width:1px;height:20px;background:#cfcfcf"></div>
<div style="position:absolute;left:349px;top:818px;width:1px;height:20px;background:#cfcfcf"></div>
<div style="position:absolute;left:413px;top:818px;width:1px;height:20px;background:#cfcfcf"></div>
<div style="position:absolute;left:484px;top:818px;width:1px;height:20px;background:#cfcfcf"></div>
<div style="position:absolute;left:555px;top:818px;width:1px;height:20px;background:#cfcfcf"></div>
<div style="position:absolute;left:626px;top:818px;width:1px;height:20px;background:#cfcfcf"></div>
<div style="position:absolute;left:697px;top:818px;width:1px;height:20px;background:#cfcfcf"></div>
<div style="position:absolute;left:768px;top:818px;width:1px;height:20px;background:#cfcfcf"></div>
<div style="position:absolute;left:839px;top:818px;width:1px;height:20px;background:#cfcfcf"></div>
<svg style="position:absolute;left:19px;top:820px" width="16" height="16" viewBox="0 0 16 16"><path d="M1.5 1.5 H8.5 L11.5 4.5 V13.5 H1.5 Z" fill="#fbfbfb" stroke="#505050" stroke-width="1"/><path d="M8.5 1.5 V4.5 H11.5" fill="none" stroke="#505050" stroke-width="1"/><circle cx="11.5" cy="12.2" r="3.4" fill="#e03a20" stroke="#a02010" stroke-width="0.6"/><circle cx="10.8" cy="11.2" r="1.5" fill="#ff9a80" opacity="0.8"/></svg>
<div class="td" style="left:38px;top:818px;width:70px;text-align:left">63543846</div>
<div class="td" style="left:107px;top:818px;width:126px">2016.03.30 18:57:59</div>
<div class="td" style="left:235px;top:818px;width:62px;letter-spacing:-0.1px">sell stop</div>
<div class="td" style="left:299px;top:818px;width:48px">0.01</div>
<div class="td" style="left:349px;top:818px;width:62px;letter-spacing:-0.1px">eurusd</div>
<div class="td" style="left:413px;top:818px;width:69px">1.13662</div>
<div class="td" style="left:484px;top:818px;width:69px">0.00000</div>
<div class="td" style="left:555px;top:818px;width:69px">0.00000</div>
<div class="td" style="left:626px;top:818px;width:69px">1.13937</div>
<svg style="position:absolute;left:938px;top:824px" width="10" height="10" viewBox="0 0 10 10"><path d="M2 2 L8 8 M8 2 L2 8" stroke="#969696" stroke-width="1.8"/></svg>
</body></html>
